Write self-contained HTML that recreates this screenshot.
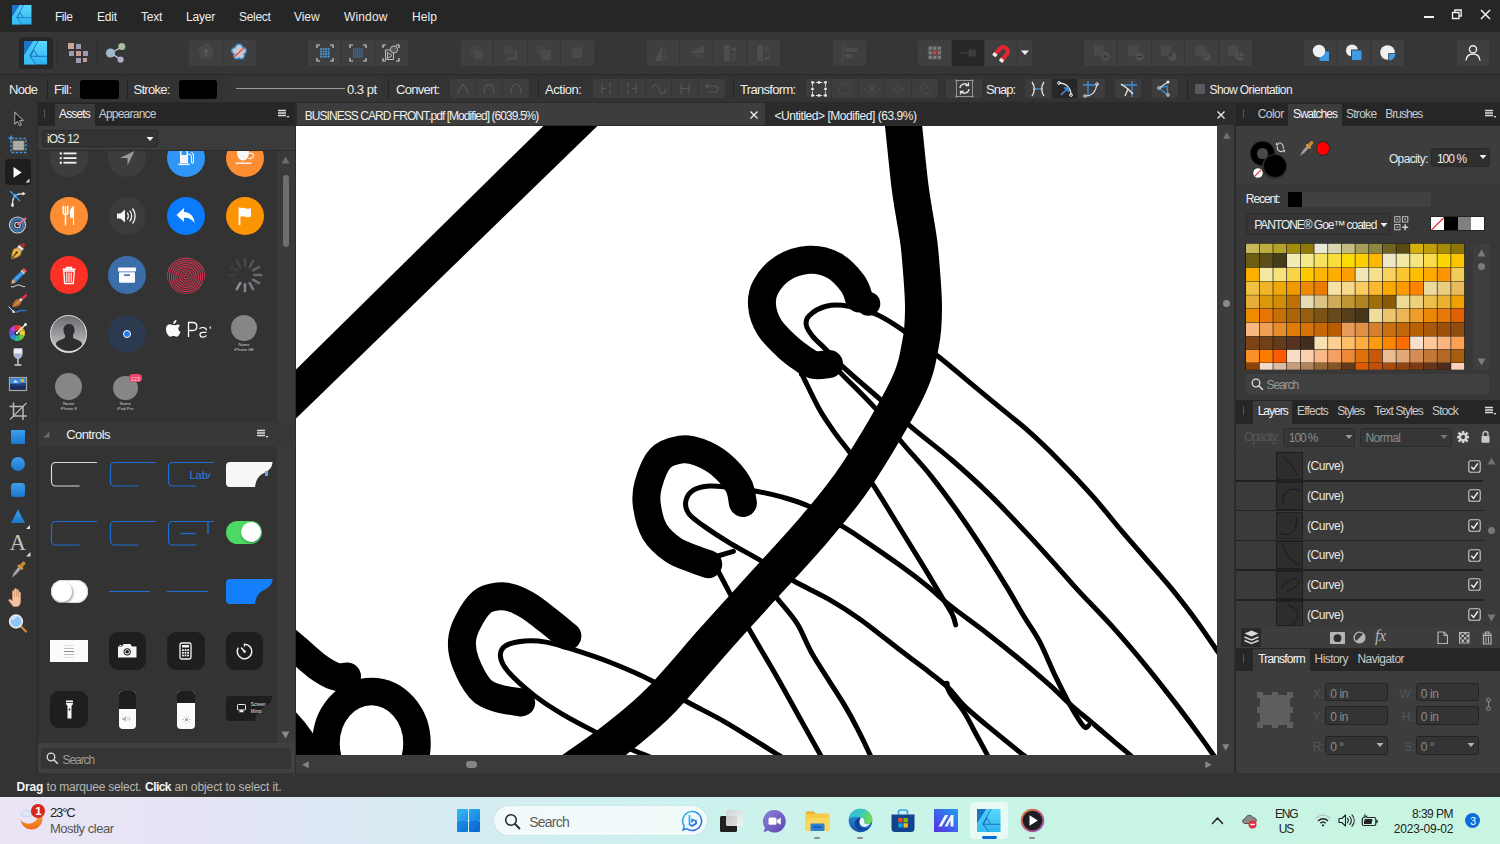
<!DOCTYPE html>
<html><head><meta charset="utf-8">
<style>
*{box-sizing:border-box;margin:0;padding:0}
html,body{width:1500px;height:844px;overflow:hidden;background:#2b2b2b}
body{font-family:"Liberation Sans",sans-serif;font-size:12px;color:#e6e6e6;position:relative}
.a{position:absolute}
.t{position:absolute;white-space:nowrap;line-height:1}
svg{overflow:hidden;display:block}
</style></head><body>
<div class="a" style="left:0;top:0;width:1500px;height:32px;background:#262626"></div>
<div class="a" style="left:0;top:32px;width:1500px;height:42px;background:#363636"></div>
<div class="a" style="left:0;top:74px;width:1500px;height:28px;background:#333333"></div>
<div class="a" style="left:0;top:102px;width:38px;height:673px;background:#333333"></div>
<div class="a" style="left:38px;top:102px;width:256.500px;height:671px;background:#383838"></div>
<div class="a" style="left:294.500px;top:102px;width:942px;height:671px;background:#2c2c2c"></div>
<div class="a" style="left:1217px;top:125px;width:17.300px;height:648px;background:#3c3c3c"></div>
<div class="a" style="left:296px;top:754.500px;width:938.300px;height:18.500px;background:#3c3c3c"></div>
<div class="a" style="left:1236.500px;top:102px;width:263.500px;height:671px;background:#383838"></div>
<div class="a" style="left:0;top:773px;width:1500px;height:24px;background:#333333"></div>
<div class="a" style="left:0;top:797px;width:1500px;height:47px;background:linear-gradient(90deg,#ebe5f5 0%,#e6e4f5 12%,#dde8f4 22%,#d5ecf2 30%,#cdf1ee 45%,#c9f4e8 60%,#c8f5e1 100%)"></div>
<svg class="a" style="left:296px;top:125.600px" width="921.300" height="629.300" viewBox="296 125.600 921.300 629.300">
<rect x="296" y="125" width="921" height="630" fill="#fff"/>
<g fill="none" stroke="#000" stroke-linecap="round" stroke-linejoin="round">
<polygon points="544,125 598,125 296,418 296,369" fill="#000" stroke="none"/>
<path d="M1230.0 670.0C1227.9 666.8 1222.8 658.8 1217.2 650.5C1211.6 642.2 1203.9 630.6 1196.5 620.5C1189.1 610.4 1179.8 598.5 1173.0 590.0C1166.2 581.5 1163.8 579.1 1155.5 569.5C1147.2 559.9 1133.8 544.8 1123.3 532.5C1112.8 520.2 1103.0 507.4 1092.4 495.5C1081.9 483.6 1070.7 471.8 1060.0 461.0C1049.3 450.2 1039.8 440.8 1028.5 430.8C1017.2 420.8 1002.9 409.6 992.5 401.0C982.1 392.4 975.1 386.6 966.0 379.0C956.9 371.4 948.1 363.7 937.7 355.6C927.4 347.5 914.0 337.4 903.9 330.5C893.8 323.6 886.5 318.5 877.3 314.4C868.1 310.3 857.4 307.2 848.9 305.8C840.4 304.4 832.8 304.2 826.2 305.8C819.6 307.4 812.4 312.1 809.1 315.3C805.8 318.5 805.7 321.3 806.3 324.8C806.9 328.3 809.6 332.1 812.9 336.2C816.2 340.3 821.2 344.3 826.2 349.4C831.2 354.4 833.9 358.1 843.0 366.5C852.1 374.9 869.8 389.8 881.1 399.7C892.4 409.6 898.9 416.1 910.8 426.2C922.7 436.3 939.3 448.8 952.4 460.1C965.5 471.4 977.1 481.9 989.4 494.0C1001.7 506.1 1015.1 520.4 1026.4 532.5C1037.7 544.6 1048.6 556.8 1057.2 566.4C1065.8 576.0 1068.8 579.9 1078.1 590.0C1087.4 600.1 1102.1 614.8 1113.3 627.3C1124.5 639.8 1134.6 651.7 1145.3 664.7C1156.0 677.7 1168.4 693.7 1177.3 705.2C1186.2 716.8 1192.7 725.7 1198.7 734.0C1204.8 742.3 1209.7 749.4 1213.6 754.9C1217.5 760.4 1220.6 765.0 1222.0 767.0" stroke-width="5"/>
<path d="M836.0 366.0C836.9 367.2 834.6 366.1 841.3 373.2C848.0 380.3 866.0 397.4 876.1 408.8C886.2 420.2 892.5 430.5 901.6 441.6C910.7 452.7 920.9 462.9 930.9 475.5C940.9 488.1 952.0 503.2 961.7 517.1C971.5 531.0 981.5 546.6 989.4 558.7C997.2 570.9 1003.1 580.5 1008.8 590.0C1014.5 599.5 1018.6 607.1 1023.7 615.6C1028.8 624.1 1034.2 630.9 1039.5 641.0C1044.8 651.1 1050.3 665.2 1055.5 676.0C1060.7 686.8 1066.2 697.8 1070.5 705.5C1074.8 713.2 1078.5 718.9 1081.0 722.5C1083.5 726.1 1084.2 726.8 1085.5 727.2C1086.8 727.7 1088.0 725.5 1088.5 725.2" stroke-width="5"/>
<path d="M801.5 374.0C801.8 374.4 800.2 370.6 803.2 376.5C806.2 382.4 814.3 400.0 819.8 409.7C825.3 419.4 831.2 427.3 836.3 434.5C841.4 441.7 844.4 444.7 850.4 452.8C856.4 460.9 864.0 470.7 872.3 483.2C880.6 495.7 891.3 513.8 900.0 527.9C908.7 542.0 917.5 556.2 924.7 568.0C931.9 579.8 938.6 591.1 943.2 598.8C947.8 606.5 950.3 609.9 952.4 614.2C954.5 618.5 955.2 622.8 955.7 624.5" stroke-width="5"/>
<path d="M1140.0 764.0C1138.4 762.5 1134.9 758.8 1130.4 754.9C1126.0 751.0 1119.7 745.8 1113.3 740.4C1106.9 735.0 1099.1 728.3 1092.0 722.3C1084.9 716.3 1077.8 710.7 1070.7 704.4C1063.6 698.1 1057.8 691.9 1049.3 684.3C1040.8 676.7 1030.2 667.6 1019.5 658.8C1008.8 650.0 996.7 640.3 985.3 631.5C973.9 622.7 960.8 613.6 951.2 606.0C941.6 598.4 936.2 592.9 927.7 586.0C919.2 579.1 911.3 573.0 900.0 564.9C888.7 556.8 869.6 543.7 860.0 537.2C850.4 530.7 850.8 531.1 842.4 526.0C834.0 520.9 819.9 511.3 809.9 506.4C799.9 501.5 791.4 499.4 782.5 496.8C773.6 494.2 765.5 492.5 756.4 490.8C747.3 489.1 735.5 487.8 727.7 486.9C719.9 486.0 715.1 485.2 709.5 485.6C703.9 486.0 697.7 487.1 693.8 489.5C689.9 491.9 686.9 496.0 686.0 499.9C685.1 503.8 685.6 508.6 688.6 513.0C691.6 517.4 697.3 521.0 704.3 526.0C711.2 531.0 720.7 537.1 730.3 542.9C739.9 548.7 751.5 554.6 762.0 560.9C772.5 567.1 782.3 574.1 793.4 580.4C804.5 586.7 817.5 592.3 828.6 598.7C839.7 605.1 848.1 610.3 860.0 618.8C871.9 627.3 889.8 641.9 900.0 649.7C910.2 657.5 913.5 659.7 921.3 665.7C929.1 671.8 939.8 679.4 946.9 686.0C954.0 692.6 956.2 697.7 964.0 705.2C971.8 712.7 983.9 722.5 993.9 730.8C1003.9 739.1 1016.9 749.4 1023.7 754.9C1030.5 760.4 1033.1 762.5 1035.0 764.0" stroke-width="5"/>
<path d="M946.9 686.0C947.6 687.4 948.4 690.2 951.2 694.5C954.1 698.8 959.7 704.8 964.0 711.6C968.3 718.4 972.9 727.9 976.8 735.1C980.7 742.3 985.0 750.1 987.5 754.9C990.0 759.7 991.2 762.5 992.0 764.0" stroke-width="5"/>
<path d="M717.8 555.6C720.4 554.8 730.8 551.7 733.4 550.9" stroke-width="5"/>
<path d="M716.0 566.0C716.5 567.1 716.6 567.8 719.1 572.6C721.6 577.4 725.8 585.4 730.8 594.7C735.8 604.0 741.4 615.1 749.0 628.6C756.6 642.1 767.5 660.0 776.4 675.6C785.3 691.2 795.1 709.3 802.5 722.5C809.9 735.7 816.8 747.9 820.7 755.0C824.6 762.1 825.1 763.3 826.0 765.0" stroke-width="5"/>
<path d="M770.0 590.0C771.3 591.5 773.2 593.1 777.7 598.7C782.2 604.3 791.4 614.1 797.3 623.4C803.2 632.7 805.1 641.2 812.9 654.7C820.7 668.2 836.4 691.2 844.2 704.2C852.0 717.2 855.4 724.4 859.8 732.9C864.1 741.4 867.8 749.6 870.3 755.0C872.8 760.4 874.2 763.3 875.0 765.0" stroke-width="5"/>
<path d="M795.0 765.0C792.3 763.3 785.1 758.8 779.0 755.0C772.9 751.2 767.3 747.6 758.2 742.0C749.1 736.4 736.5 728.2 724.3 721.2C712.1 714.2 697.1 707.0 685.2 700.3C673.3 693.6 665.2 687.2 652.7 680.8C640.2 674.4 623.4 667.2 610.0 661.9C596.6 656.6 582.8 652.2 572.1 648.8C561.5 645.4 554.0 643.1 546.1 641.7C538.2 640.3 531.5 639.9 524.8 640.5C518.1 641.1 509.9 642.7 505.8 645.3C501.7 647.9 500.0 651.6 500.4 655.9C500.8 660.2 502.6 664.8 508.2 671.3C513.8 677.8 525.1 687.9 534.2 695.0C543.3 702.1 552.4 707.9 562.7 714.0C573.0 720.1 584.5 726.0 595.8 731.8C607.1 737.6 622.0 744.7 630.4 748.6C638.8 752.5 639.4 752.3 646.0 755.0C652.6 757.7 666.0 763.3 670.0 765.0" stroke-width="5"/>
<circle cx="946.5" cy="683.5" r="3.2" fill="#000" stroke="none"/>
<path d="M900.0 95.0C900.6 100.0 901.8 109.8 903.5 125.0C905.2 140.2 907.8 168.5 910.0 186.0C912.2 203.5 915.3 218.9 917.0 230.0C918.7 241.1 918.9 240.1 920.0 252.7C921.1 265.3 923.4 290.6 923.5 305.8C923.6 321.0 923.3 329.8 920.5 343.7C917.7 357.6 917.2 367.5 906.7 389.2C896.2 410.9 872.5 450.7 857.2 473.8C841.9 496.9 832.5 507.4 815.0 528.0C797.5 548.6 769.1 578.7 752.3 597.4C735.4 616.1 729.1 622.9 713.9 640.0C698.6 657.1 675.9 684.5 660.8 700.0C645.7 715.5 634.5 723.8 623.5 732.9C612.5 742.0 605.9 746.5 594.5 754.7C583.1 762.9 561.6 777.5 555.0 782.0" stroke-width="37" stroke-linecap="butt"/>
<path d="M859.0 298.0C858.0 295.5 856.9 288.5 852.7 283.0C848.5 277.5 841.0 268.9 833.7 265.0C826.4 261.1 817.6 258.9 809.1 259.4C800.6 259.9 789.9 263.3 782.6 267.9C775.3 272.5 768.9 280.6 765.5 286.9C762.1 293.2 761.5 299.2 762.1 305.8C762.7 312.4 765.2 320.1 769.3 326.7C773.3 333.3 780.7 340.2 786.4 345.6C792.1 351.0 798.7 355.7 803.4 358.9C808.1 362.1 810.5 363.8 814.8 364.6C819.1 365.4 826.6 363.8 829.0 363.6" stroke-width="28"/>
<path d="M742.9 502.5C742.1 499.5 742.0 490.8 738.2 484.3C734.4 477.8 726.4 468.8 719.9 463.4C713.4 458.0 705.5 454.1 699.0 451.7C692.5 449.3 687.3 448.0 680.8 449.1C674.3 450.2 665.4 452.3 660.0 458.2C654.6 464.1 650.4 476.5 648.2 484.3C646.0 492.1 645.8 497.3 646.9 505.1C648.0 512.9 650.4 523.8 654.7 531.2C659.1 538.6 666.5 544.8 673.0 549.4C679.5 554.0 687.9 556.2 693.8 558.6C699.7 561.0 705.8 562.9 708.2 563.8" stroke-width="28"/>
<path d="M567.4 635.8C564.2 633.2 554.8 625.3 548.5 620.4C542.2 615.5 535.4 610.0 529.5 606.2C523.6 602.5 518.0 599.6 512.9 597.9C507.8 596.2 503.8 595.4 498.7 596.0C493.6 596.6 487.2 597.2 482.1 601.5C477.0 605.8 471.2 615.1 467.9 621.6C464.5 628.1 462.4 633.8 462.0 640.5C461.6 647.2 462.5 654.0 465.5 661.9C468.5 669.8 474.7 682.0 479.8 687.9C484.9 693.8 489.4 695.0 496.3 697.4C503.2 699.8 517.1 701.3 521.2 702.1" stroke-width="28"/>
<circle cx="868.3" cy="303.3" r="12" fill="#000" stroke="none"/>
<path d="M280.0 634.0C282.7 636.3 289.9 642.5 296.0 647.7C302.1 652.9 310.0 660.7 316.5 665.4C323.0 670.1 329.9 674.2 335.0 676.0C340.1 677.8 345.0 676.0 347.0 676.0" stroke-width="28"/>
<ellipse cx="371.5" cy="743" rx="45.5" ry="52" stroke-width="27.5"/>
<polygon points="296,711.8 305,722 312.7,732.6 318,745 320,755 296,755" fill="#000" stroke="none"/>
</g></svg>
<svg class="a" style="left:12px;top:5px" width="19.5" height="19.5" viewBox="0 0 20 20"><defs><linearGradient id="lg120" x1="0" y1="0" x2="0" y2="1"><stop offset="0" stop-color="#5cd9fd"/><stop offset="1" stop-color="#2db2ef"/></linearGradient></defs><rect width="20" height="20" fill="url(#lg120)"/><polygon points="0,0 8,0 0,12.4" fill="#1b74c8"/><polygon points="8,0 12,0 5,12.6 10,20 0,20 0,12.4" fill="#3fc4f7" opacity="0.55"/><path d="M12 0L5 12.6L10 20M5 13H20M8.400 7.600L11.600 12.800M8.400 7.600L5.600 12.800" stroke="#1767b4" stroke-width="0.750" fill="none"/></svg>
<div class="t" style="left:55.0px;top:10.8px;font-size:12px;color:#ededed;letter-spacing:-0.459px;">File</div>
<div class="t" style="left:97.0px;top:10.8px;font-size:12px;color:#ededed;letter-spacing:-0.170px;">Edit</div>
<div class="t" style="left:141.0px;top:10.8px;font-size:12px;color:#ededed;letter-spacing:-0.252px;">Text</div>
<div class="t" style="left:186.0px;top:10.8px;font-size:12px;color:#ededed;letter-spacing:-0.203px;">Layer</div>
<div class="t" style="left:239.0px;top:10.8px;font-size:12px;color:#ededed;letter-spacing:-0.309px;">Select</div>
<div class="t" style="left:294.0px;top:10.8px;font-size:12px;color:#ededed;letter-spacing:-0.073px;">View</div>
<div class="t" style="left:344.0px;top:10.8px;font-size:12px;color:#ededed;letter-spacing:0.137px;">Window</div>
<div class="t" style="left:412.0px;top:10.8px;font-size:12px;color:#ededed;letter-spacing:0.080px;">Help</div>
<div class="a" style="left:1424px;top:15.5px;width:9.5px;height:2.5px;background:#f2f2f2;"></div>
<svg class="a" style="left:1451px;top:8px" width="12" height="12" viewBox="0 0 12 12"><path d="M1.5 4.5h6.5v6h-6.5zM3.8 4.3V2h6.4v6H8.2" fill="none" stroke="#f2f2f2" stroke-width="1.3"/></svg>
<svg class="a" style="left:1480px;top:9px" width="11" height="11" viewBox="0 0 11 11"><path d="M1 1l9 9M10 1l-9 9" stroke="#f2f2f2" stroke-width="1.5"/></svg>
<div class="a" style="left:0px;top:73.8px;width:1500px;height:1.2px;background:#282828;"></div>
<div class="a" style="left:38px;top:101.7px;width:1462px;height:0.8px;background:#2a2a2a;"></div>
<div class="a" style="left:19px;top:37px;width:33.5px;height:31.5px;background:#282828;border-radius:3px;"></div>
<svg class="a" style="left:23.5px;top:41px" width="23.5" height="23.5" viewBox="0 0 20 20"><defs><linearGradient id="lg235" x1="0" y1="0" x2="0" y2="1"><stop offset="0" stop-color="#5cd9fd"/><stop offset="1" stop-color="#2db2ef"/></linearGradient></defs><rect width="20" height="20" fill="url(#lg235)"/><polygon points="0,0 8,0 0,12.4" fill="#1b74c8"/><polygon points="8,0 12,0 5,12.6 10,20 0,20 0,12.4" fill="#3fc4f7" opacity="0.55"/><path d="M12 0L5 12.6L10 20M5 13H20M8.400 7.600L11.600 12.800M8.400 7.600L5.600 12.800" stroke="#1767b4" stroke-width="0.750" fill="none"/></svg>
<div class="a" style="left:57px;top:38px;width:1px;height:29px;background:#2a2a2a;"></div>
<div class="a" style="left:97px;top:38px;width:1px;height:29px;background:#2a2a2a;"></div>
<div class="a" style="left:68px;top:43px;width:6px;height:6px;background:#c9a696;"></div>
<div class="a" style="left:76px;top:44.2px;width:5px;height:5px;background:#9c9bb3;"></div>
<div class="a" style="left:69.2px;top:51px;width:5px;height:5px;background:#9c9bb3;"></div>
<div class="a" style="left:76px;top:51px;width:5.2px;height:5.2px;background:#c39d92;"></div>
<div class="a" style="left:83px;top:51px;width:5px;height:5px;background:#9c9bb3;"></div>
<div class="a" style="left:76px;top:58px;width:5px;height:5px;background:#9c9bb3;"></div>
<div class="a" style="left:83px;top:58px;width:4px;height:4px;background:#c39d92;"></div>
<svg class="a" style="left:104px;top:41px" width="24" height="24" viewBox="0 0 24 24"><path d="M7 12L17.5 6M7 12L16.5 18.5" stroke="#cfd6db" stroke-width="1.2"/><circle cx="6.5" cy="12" r="4.6" fill="#9db9c9"/><circle cx="17.8" cy="5.6" r="3.5" fill="#a9bda0"/><circle cx="16.6" cy="18.6" r="3.1" fill="#b5aacb"/></svg>
<div class="a" style="left:189px;top:40px;width:66.5px;height:25.5px;background:#3f3f3f;border-radius:2px;"></div><div class="a" style="left:221.75px;top:40px;width:1px;height:25.5px;background:#343434;"></div>
<svg class="a" style="left:193.5px;top:41px" width="24" height="24" viewBox="0 0 24 24"><path d="M12 3.2c2.2 0 3.6 1.6 3.5 3.4 1.9-.2 3.7 1.2 3.7 3.2 0 1.6-1 2.7-2.3 3.2.8 1.4.4 3.4-1.2 4.3-1.4.8-3 .4-3.7-.6-.7 1-2.3 1.4-3.7.6-1.6-.9-2-2.9-1.2-4.3C5.800 12.500 4.800 11.400 4.800 9.800c0-2 1.800-3.400 3.700-3.200C8.400 4.800 9.800 3.200 12 3.200z" fill="#484848" stroke="#505050" stroke-width="1"/><path d="M12 15V8.500M9.500 11L12 8.500l2.500 2.500" stroke="#5c5c5c" stroke-width="1.300" fill="none"/></svg>
<svg class="a" style="left:227px;top:41px" width="24" height="24" viewBox="0 0 24 24"><path d="M12 3.2c2.2 0 3.6 1.6 3.5 3.4 1.9-.2 3.7 1.2 3.7 3.2 0 1.6-1 2.7-2.3 3.2.8 1.4.4 3.4-1.2 4.3-1.4.8-3 .4-3.7-.6-.7 1-2.3 1.4-3.7.6-1.6-.9-2-2.9-1.2-4.3C5.800 12.500 4.800 11.400 4.800 9.800c0-2 1.800-3.400 3.700-3.200C8.400 4.800 9.800 3.200 12 3.200z" fill="#c9c9cf" stroke="#3c93dc" stroke-width="1.400"/><path d="M6.500 16.500L17.500 6.500" stroke="#ef4a3c" stroke-width="1.500"/></svg>
<div class="a" style="left:308px;top:40px;width:100px;height:25.5px;background:#3f3f3f;border-radius:2px;"></div><div class="a" style="left:340.833px;top:40px;width:1px;height:25.5px;background:#343434;"></div><div class="a" style="left:374.167px;top:40px;width:1px;height:25.5px;background:#343434;"></div>
<svg class="a" style="left:313.5px;top:42px" width="22" height="22" viewBox="0 0 22 22"><rect x="6.20" y="6.20" width="1.80" height="1.80" fill="#4a9be0"/><rect x="6.20" y="8.70" width="1.80" height="1.80" fill="#4a9be0"/><rect x="6.20" y="11.20" width="1.80" height="1.80" fill="#4a9be0"/><rect x="6.20" y="13.70" width="1.80" height="1.80" fill="#4a9be0"/><rect x="8.70" y="6.20" width="1.80" height="1.80" fill="#4a9be0"/><rect x="8.70" y="8.70" width="1.80" height="1.80" fill="#4a9be0"/><rect x="8.70" y="11.20" width="1.80" height="1.80" fill="#4a9be0"/><rect x="8.70" y="13.70" width="1.80" height="1.80" fill="#4a9be0"/><rect x="11.20" y="6.20" width="1.80" height="1.80" fill="#4a9be0"/><rect x="11.20" y="8.70" width="1.80" height="1.80" fill="#4a9be0"/><rect x="11.20" y="11.20" width="1.80" height="1.80" fill="#4a9be0"/><rect x="11.20" y="13.70" width="1.80" height="1.80" fill="#4a9be0"/><rect x="13.70" y="6.20" width="1.80" height="1.80" fill="#4a9be0"/><rect x="13.70" y="8.70" width="1.80" height="1.80" fill="#4a9be0"/><rect x="13.70" y="11.20" width="1.80" height="1.80" fill="#4a9be0"/><rect x="13.70" y="13.70" width="1.80" height="1.80" fill="#4a9be0"/><path d="M3 6V3h3M16 3h3v3M19 16v3h-3M6 19H3v-3" stroke="#cfcfcf" stroke-width="1.2" fill="none"/></svg>
<svg class="a" style="left:347px;top:42px" width="22" height="22" viewBox="0 0 22 22"><rect x="6.20" y="6.20" width="1.30" height="1.30" fill="#3b7cb8"/><rect x="6.20" y="8.20" width="1.30" height="1.30" fill="#3b7cb8"/><rect x="6.20" y="10.20" width="1.30" height="1.30" fill="#3b7cb8"/><rect x="6.20" y="12.20" width="1.30" height="1.30" fill="#3b7cb8"/><rect x="6.20" y="14.20" width="1.30" height="1.30" fill="#3b7cb8"/><rect x="8.20" y="6.20" width="1.30" height="1.30" fill="#3b7cb8"/><rect x="8.20" y="8.20" width="1.30" height="1.30" fill="#3b7cb8"/><rect x="8.20" y="10.20" width="1.30" height="1.30" fill="#3b7cb8"/><rect x="8.20" y="12.20" width="1.30" height="1.30" fill="#3b7cb8"/><rect x="8.20" y="14.20" width="1.30" height="1.30" fill="#3b7cb8"/><rect x="10.20" y="6.20" width="1.30" height="1.30" fill="#3b7cb8"/><rect x="10.20" y="8.20" width="1.30" height="1.30" fill="#3b7cb8"/><rect x="10.20" y="10.20" width="1.30" height="1.30" fill="#3b7cb8"/><rect x="10.20" y="12.20" width="1.30" height="1.30" fill="#3b7cb8"/><rect x="10.20" y="14.20" width="1.30" height="1.30" fill="#3b7cb8"/><rect x="12.20" y="6.20" width="1.30" height="1.30" fill="#3b7cb8"/><rect x="12.20" y="8.20" width="1.30" height="1.30" fill="#3b7cb8"/><rect x="12.20" y="10.20" width="1.30" height="1.30" fill="#3b7cb8"/><rect x="12.20" y="12.20" width="1.30" height="1.30" fill="#3b7cb8"/><rect x="12.20" y="14.20" width="1.30" height="1.30" fill="#3b7cb8"/><rect x="14.20" y="6.20" width="1.30" height="1.30" fill="#3b7cb8"/><rect x="14.20" y="8.20" width="1.30" height="1.30" fill="#3b7cb8"/><rect x="14.20" y="10.20" width="1.30" height="1.30" fill="#3b7cb8"/><rect x="14.20" y="12.20" width="1.30" height="1.30" fill="#3b7cb8"/><rect x="14.20" y="14.20" width="1.30" height="1.30" fill="#3b7cb8"/><path d="M3 6V3h3M16 3h3v3M19 16v3h-3M6 19H3v-3" stroke="#cfcfcf" stroke-width="1.2" fill="none"/></svg>
<svg class="a" style="left:380px;top:42px" width="22" height="22" viewBox="0 0 22 22"><path d="M3 6V3h3M16 3h3v3M19 16v3h-3M6 19H3v-3" stroke="#cfcfcf" stroke-width="1.2" fill="none"/><path d="M5.500 8h8v9.500h-8z" fill="#474747" stroke="#b9b9b9" stroke-width="1"/><circle cx="14" cy="7.500" r="3.600" fill="#5a5a5a" stroke="#b9b9b9" stroke-width="1"/><path d="M7.500 10.500l4.500 3-4.500 3z" fill="none" stroke="#b9b9b9" stroke-width="1"/></svg>
<div class="a" style="left:460.5px;top:40px;width:133px;height:25.5px;background:#3f3f3f;border-radius:2px;"></div><div class="a" style="left:493.25px;top:40px;width:1px;height:25.5px;background:#343434;"></div><div class="a" style="left:526.5px;top:40px;width:1px;height:25.5px;background:#343434;"></div><div class="a" style="left:559.75px;top:40px;width:1px;height:25.5px;background:#343434;"></div>
<svg class="a" style="left:465.1px;top:41px" width="24" height="24" viewBox="0 0 24 24"><g transform="translate(12,12)"><rect x="-6" y="-6" width="8" height="8" fill="#464646"/><rect x="-2" y="-2" width="8" height="8" fill="#4b4b4b"/></g></svg>
<svg class="a" style="left:498.35px;top:41px" width="24" height="24" viewBox="0 0 24 24"><g transform="translate(12,12)"><rect x="-6" y="-7" width="9" height="9" fill="#454545"/><path d="M4 -3h3v10h-10v-3h7z" fill="#4b4b4b"/></g></svg>
<svg class="a" style="left:531.6px;top:41px" width="24" height="24" viewBox="0 0 24 24"><g transform="translate(12,12)"><rect x="-7" y="-7" width="9" height="9" fill="#454545"/><rect x="-3" y="-3" width="10" height="10" fill="#4b4b4b"/></g></svg>
<svg class="a" style="left:564.85px;top:41px" width="24" height="24" viewBox="0 0 24 24"><g transform="translate(12,12)"><rect x="-6" y="-6" width="11" height="11" fill="#464646"/><rect x="-4" y="-4" width="9" height="9" fill="#4b4b4b"/></g></svg>
<div class="a" style="left:646.5px;top:40px;width:133px;height:25.5px;background:#3f3f3f;border-radius:2px;"></div><div class="a" style="left:679.25px;top:40px;width:1px;height:25.5px;background:#343434;"></div><div class="a" style="left:712.5px;top:40px;width:1px;height:25.5px;background:#343434;"></div><div class="a" style="left:745.75px;top:40px;width:1px;height:25.5px;background:#343434;"></div>
<svg class="a" style="left:651px;top:41px" width="24" height="24" viewBox="0 0 24 24"><path d="M11.500 4v16h-8z" fill="#4d4d4d"/><path d="M12.500 4v16h5z" fill="#454545"/></svg>
<svg class="a" style="left:684.5px;top:41px" width="24" height="24" viewBox="0 0 24 24"><path d="M4 12L19 4.500V12z" fill="#4d4d4d"/><path d="M4 13l15 0v5z" fill="#454545"/></svg>
<svg class="a" style="left:717.5px;top:41px" width="24" height="24" viewBox="0 0 24 24"><rect x="6" y="4" width="6" height="16" fill="#4d4d4d"/><rect x="14" y="12" width="4" height="8" fill="#464646"/><path d="M14 8h3.500v2.500M16 6.500L14 8l2 1.500" stroke="#565656" fill="none" stroke-width="1.200"/></svg>
<svg class="a" style="left:751px;top:41px" width="24" height="24" viewBox="0 0 24 24"><rect x="6" y="4" width="6" height="16" fill="#4d4d4d"/><rect x="14" y="4" width="4" height="8" fill="#464646"/><path d="M18 14v3.500h-4M15.500 16L14 17.500l1.500 1.500" stroke="#565656" fill="none" stroke-width="1.200"/></svg>
<div class="a" style="left:833px;top:40px;width:33px;height:25.5px;background:#3f3f3f;border-radius:2px;"></div>
<svg class="a" style="left:837.5px;top:41px" width="24" height="24" viewBox="0 0 24 24"><path d="M5 4v16" stroke="#4e4e4e" stroke-width="1.200"/><rect x="7" y="7" width="12" height="4" fill="#4c4c4c"/><rect x="7" y="13" width="8" height="4" fill="#4c4c4c"/></svg>
<div class="a" style="left:917.5px;top:40px;width:114.5px;height:25.5px;background:#3f3f3f;border-radius:2px;"></div><div class="a" style="left:950.7px;top:40px;width:1px;height:25.5px;background:#343434;"></div><div class="a" style="left:984.3px;top:40px;width:1px;height:25.5px;background:#343434;"></div><div class="a" style="left:1017.4px;top:40px;width:1px;height:25.5px;background:#343434;"></div>
<div class="a" style="left:951.7px;top:40px;width:32.6px;height:25.5px;background:#272727;"></div>
<svg class="a" style="left:922.5px;top:41px" width="24" height="24" viewBox="0 0 24 24"><rect x="5.5" y="5.5" width="3.400" height="3.400" fill="#7b7b7b"/><rect x="5.5" y="10.1" width="3.400" height="3.400" fill="#7b7b7b"/><rect x="5.5" y="14.7" width="3.400" height="3.400" fill="#7b7b7b"/><rect x="10.1" y="5.5" width="3.400" height="3.400" fill="#7b7b7b"/><rect x="10.1" y="10.1" width="3.400" height="3.400" fill="#e63b36"/><rect x="10.1" y="14.7" width="3.400" height="3.400" fill="#7b7b7b"/><rect x="14.7" y="5.5" width="3.400" height="3.400" fill="#7b7b7b"/><rect x="14.7" y="10.1" width="3.400" height="3.400" fill="#7b7b7b"/><rect x="14.7" y="14.7" width="3.400" height="3.400" fill="#7b7b7b"/><path d="M4 9.500h16M4 14.200h16M9.500 4v16M14.200 4v16" stroke="#5c5c5c" stroke-width="0.600"/></svg>
<svg class="a" style="left:956px;top:41px" width="24" height="24" viewBox="0 0 24 24"><rect x="13" y="8.500" width="7" height="7" fill="#3a3a3a"/><path d="M4 12h11M12.500 9.500L15 12l-2.500 2.500" stroke="#454545" stroke-width="1.200" fill="none"/></svg>
<svg class="a" style="left:989.5px;top:41px" width="24" height="24" viewBox="0 0 24 24"><g transform="rotate(40 12 12)"><path d="M5.500 19V10a6.500 6.500 0 0 1 13 0v9h-4.200v-9a2.300 2.300 0 0 0-4.600 0v9z" fill="#e5252f"/><rect x="5.500" y="16.200" width="4.200" height="3.400" fill="#f0f0f0"/><rect x="14.300" y="16.200" width="4.200" height="3.400" fill="#f0f0f0"/></g></svg>
<svg class="a" style="left:1020px;top:49px" width="10" height="8" viewBox="0 0 10 8"><path d="M1 1.500h8L5 6z" fill="#f0f0f0"/></svg>
<div class="a" style="left:1084px;top:40px;width:167.5px;height:25.5px;background:#3f3f3f;border-radius:2px;"></div><div class="a" style="left:1117px;top:40px;width:1px;height:25.5px;background:#343434;"></div><div class="a" style="left:1150.5px;top:40px;width:1px;height:25.5px;background:#343434;"></div><div class="a" style="left:1184px;top:40px;width:1px;height:25.5px;background:#343434;"></div><div class="a" style="left:1217.5px;top:40px;width:1px;height:25.5px;background:#343434;"></div>
<svg class="a" style="left:1089px;top:41px" width="24" height="24" viewBox="0 0 24 24"><rect x="5" y="4.500" width="10.500" height="10.500" fill="#494949"/><circle cx="16.500" cy="15.500" r="4.300" fill="#4f4f4f"/><path d="M14.500 15.500h4M16.500 13.500v4" stroke="#2f2f2f" stroke-width="1.100"/></svg>
<svg class="a" style="left:1122.5px;top:41px" width="24" height="24" viewBox="0 0 24 24"><rect x="5" y="4.500" width="10.500" height="10.500" fill="#494949"/><circle cx="16.500" cy="15.500" r="4.300" fill="#4f4f4f"/><path d="M14.500 15.500h4" stroke="#2f2f2f" stroke-width="1.100"/></svg>
<svg class="a" style="left:1156px;top:41px" width="24" height="24" viewBox="0 0 24 24"><rect x="5" y="4.500" width="10.500" height="10.500" fill="#494949"/><circle cx="16.500" cy="15.500" r="4.300" fill="#4f4f4f"/><path d="M16.500 15.500V11.500A4 4 0 0 0 12.500 15.500z" fill="#3d3d3d"/></svg>
<svg class="a" style="left:1189.5px;top:41px" width="24" height="24" viewBox="0 0 24 24"><rect x="5" y="4.500" width="10.500" height="10.500" fill="#494949"/><circle cx="16.500" cy="15.500" r="4.300" fill="#4f4f4f"/><path d="M12.500 15.500h4v-4" stroke="#3d3d3d" fill="none"/></svg>
<svg class="a" style="left:1223px;top:41px" width="24" height="24" viewBox="0 0 24 24"><rect x="5" y="4.500" width="10.500" height="10.500" fill="#494949"/><circle cx="16.500" cy="15.500" r="4.300" fill="#4f4f4f"/><path d="M16.500 11.500v4h4" stroke="#3d3d3d" fill="none"/></svg>
<div class="a" style="left:1304px;top:40px;width:100px;height:25.5px;background:#3f3f3f;border-radius:2px;"></div><div class="a" style="left:1336.83px;top:40px;width:1px;height:25.5px;background:#343434;"></div><div class="a" style="left:1370.17px;top:40px;width:1px;height:25.5px;background:#343434;"></div>
<svg class="a" style="left:1308.5px;top:41px" width="24" height="24" viewBox="0 0 24 24"><rect x="10.500" y="10.500" width="9.500" height="9.500" fill="#3e9be8"/><circle cx="10" cy="10" r="6.200" fill="#f0f0f0"/></svg>
<svg class="a" style="left:1342px;top:41px" width="24" height="24" viewBox="0 0 24 24"><circle cx="10" cy="9.500" r="6" fill="#f0f0f0"/><rect x="9.500" y="9" width="10.500" height="10.500" fill="#3e9be8" stroke="#3f3f3f" stroke-width="1"/></svg>
<svg class="a" style="left:1375.5px;top:41px" width="24" height="24" viewBox="0 0 24 24"><circle cx="11.500" cy="11.500" r="7.300" fill="#f0f0f0"/><path d="M12.500 12.500h7.500a7.500 7.500 0 0 1-7.500 7.500z" fill="#3e9be8" stroke="#3f3f3f" stroke-width="0.800"/></svg>
<div class="a" style="left:1456.5px;top:40px;width:32.5px;height:25.5px;background:#3f3f3f;border-radius:2px;"></div>
<svg class="a" style="left:1461px;top:41px" width="24" height="24" viewBox="0 0 24 24"><circle cx="12" cy="8.300" r="3.600" fill="none" stroke="#f0f0f0" stroke-width="1.400"/><path d="M5 19.500c.5-4.500 3.500-6.500 7-6.500s6.500 2 7 6.500" fill="none" stroke="#f0f0f0" stroke-width="1.400"/></svg>
<div class="t" style="left:9.0px;top:83.0px;font-size:13px;color:#ededed;letter-spacing:-0.669px;">Node</div>
<div class="a" style="left:47px;top:79px;width:1px;height:20px;background:#252525;"></div>
<div class="t" style="left:54.0px;top:83.0px;font-size:13px;color:#ededed;letter-spacing:-0.543px;">Fill:</div>
<div class="a" style="left:80px;top:80px;width:38.5px;height:18.5px;background:#000;border-radius:3px;"></div>
<div class="a" style="left:127px;top:79px;width:1px;height:20px;background:#252525;"></div>
<div class="t" style="left:133.5px;top:83.0px;font-size:13px;color:#ededed;letter-spacing:-0.741px;">Stroke:</div>
<div class="a" style="left:178.5px;top:80px;width:38.5px;height:18.5px;background:#000;border-radius:3px;"></div>
<div class="a" style="left:225.5px;top:77px;width:155.5px;height:23.5px;background:#353535;border-radius:2px;"></div>
<div class="a" style="left:235.5px;top:88.3px;width:109px;height:1px;background:#9a9a9a;"></div>
<div class="t" style="left:347.0px;top:83.0px;font-size:13px;color:#ededed;letter-spacing:-0.504px;">0.3 pt</div>
<div class="a" style="left:387.5px;top:79px;width:1px;height:20px;background:#252525;"></div>
<div class="t" style="left:396.0px;top:83.0px;font-size:13px;color:#ededed;letter-spacing:-0.704px;">Convert:</div>
<div class="a" style="left:450px;top:78.8px;width:78.5px;height:18.8px;background:#3d3d3d;border-radius:2px;"></div><div class="a" style="left:475.667px;top:78.8px;width:1px;height:18.8px;background:#343434;"></div><div class="a" style="left:501.833px;top:78.8px;width:1px;height:18.8px;background:#343434;"></div>
<svg class="a" style="left:453px;top:79px" width="20" height="19" viewBox="0 0 20 19"><path d="M4 15L10 5l6 10" stroke="#575757" fill="none" stroke-width="1.100"/></svg>
<svg class="a" style="left:479px;top:79px" width="20" height="19" viewBox="0 0 20 19"><path d="M5 15c0-6 2-9 5-9M15 15c0-6-2-9-5-9M6 6h8" stroke="#575757" fill="none" stroke-width="1.100"/></svg>
<svg class="a" style="left:505.5px;top:79px" width="20" height="19" viewBox="0 0 20 19"><path d="M5 15c0-7 2-10 5-10s5 3 5 10" stroke="#575757" fill="none" stroke-width="1.100"/></svg>
<div class="a" style="left:537.5px;top:79px;width:1px;height:20px;background:#252525;"></div>
<div class="t" style="left:545.0px;top:83.0px;font-size:13px;color:#ededed;letter-spacing:-0.463px;">Action:</div>
<div class="a" style="left:592.5px;top:78.8px;width:132px;height:18.8px;background:#3d3d3d;border-radius:2px;"></div><div class="a" style="left:618.4px;top:78.8px;width:1px;height:18.8px;background:#343434;"></div><div class="a" style="left:644.8px;top:78.8px;width:1px;height:18.8px;background:#343434;"></div><div class="a" style="left:671.2px;top:78.8px;width:1px;height:18.8px;background:#343434;"></div><div class="a" style="left:697.6px;top:78.8px;width:1px;height:18.8px;background:#343434;"></div>
<svg class="a" style="left:595.7px;top:79px" width="20" height="19" viewBox="0 0 20 19"><path d="M6 4v11M14 4v4M14 11v4M6 9.500h4" stroke="#575757" fill="none" stroke-width="1.100"/></svg>
<svg class="a" style="left:622.1px;top:79px" width="20" height="19" viewBox="0 0 20 19"><path d="M6 4v4M6 11v4M14 4v11M10 9.500h4" stroke="#575757" fill="none" stroke-width="1.100"/></svg>
<svg class="a" style="left:648.5px;top:79px" width="20" height="19" viewBox="0 0 20 19"><path d="M3 10c2-6 5-6 7 0s5 6 7 0" stroke="#575757" fill="none" stroke-width="1.100"/></svg>
<svg class="a" style="left:674.9px;top:79px" width="20" height="19" viewBox="0 0 20 19"><path d="M6 4v11M14 4v11M6 9.500h8" stroke="#575757" fill="none" stroke-width="1.100"/></svg>
<svg class="a" style="left:701.3px;top:79px" width="20" height="19" viewBox="0 0 20 19"><path d="M5 7h9a3 3 0 0 1 0 6H8M7.500 5L5 7l2.500 2" stroke="#575757" fill="none" stroke-width="1.100"/></svg>
<div class="a" style="left:732.5px;top:79px;width:1px;height:20px;background:#252525;"></div>
<div class="t" style="left:740.0px;top:83.0px;font-size:13px;color:#ededed;letter-spacing:-0.686px;">Transform:</div>
<div class="a" style="left:805.5px;top:78.8px;width:132px;height:18.8px;background:#3d3d3d;border-radius:2px;"></div><div class="a" style="left:831.4px;top:78.8px;width:1px;height:18.8px;background:#343434;"></div><div class="a" style="left:857.8px;top:78.8px;width:1px;height:18.8px;background:#343434;"></div><div class="a" style="left:884.2px;top:78.8px;width:1px;height:18.8px;background:#343434;"></div><div class="a" style="left:910.6px;top:78.8px;width:1px;height:18.8px;background:#343434;"></div>
<svg class="a" style="left:808.5px;top:78.5px" width="20" height="20" viewBox="0 0 20 20"><rect x="3.500" y="3.500" width="13" height="13" fill="none" stroke="#e0e0e0" stroke-width="1" stroke-dasharray="2.200 1.500"/><g fill="#e8e8e8"><circle cx="3.500" cy="3.500" r="1.400"/><circle cx="16.500" cy="3.500" r="1.400"/><circle cx="3.500" cy="16.500" r="1.400"/><circle cx="16.500" cy="16.500" r="1.400"/><circle cx="10" cy="3.500" r="1.400"/><circle cx="10" cy="16.500" r="1.400"/><circle cx="3.500" cy="10" r="1.400"/><circle cx="16.500" cy="10" r="1.400"/></g></svg>
<svg class="a" style="left:835px;top:78.5px" width="20" height="20" viewBox="0 0 20 20"><circle cx="10" cy="10" r="5.500" fill="none" stroke="#4c4c4c"/><path d="M10 4.500v3" stroke="#4c4c4c"/></svg>
<svg class="a" style="left:861.5px;top:78.5px" width="20" height="20" viewBox="0 0 20 20"><path d="M3 10c3-4.500 11-4.500 14 0-3 4.500-11 4.500-14 0z" fill="none" stroke="#4c4c4c"/><circle cx="10" cy="10" r="2" fill="#4c4c4c"/></svg>
<svg class="a" style="left:888px;top:78.5px" width="20" height="20" viewBox="0 0 20 20"><path d="M10 4v12M4 10h4M12 10h4M6.500 8L8 10l-1.500 2M13.500 8L12 10l1.500 2" fill="none" stroke="#4c4c4c"/></svg>
<svg class="a" style="left:914.5px;top:78.5px" width="20" height="20" viewBox="0 0 20 20"><circle cx="10" cy="10" r="5" fill="none" stroke="#4c4c4c"/><path d="M7 13l6-6" stroke="#4c4c4c"/></svg>
<div class="a" style="left:946px;top:78.8px;width:35.5px;height:18.8px;background:#3d3d3d;border-radius:2px;"></div>
<svg class="a" style="left:953.5px;top:78px" width="21" height="21" viewBox="0 0 21 21"><rect x="2.500" y="2.500" width="16" height="16" fill="none" stroke="#9a9a9a" stroke-width="0.900"/><g fill="#9a9a9a"><circle cx="2.500" cy="2.500" r="1.100"/><circle cx="18.500" cy="2.500" r="1.100"/><circle cx="2.500" cy="18.500" r="1.100"/><circle cx="18.500" cy="18.500" r="1.100"/></g><path d="M6 10a4.500 4.500 0 0 1 8-2.500M15 11a4.500 4.500 0 0 1-8 2.500M14.500 4.500v3.200h-3.200M6.500 16.500v-3.200h3.200" fill="none" stroke="#e4e4e4" stroke-width="1.300"/></svg>
<div class="t" style="left:986.0px;top:83.0px;font-size:13px;color:#ededed;letter-spacing:-0.994px;">Snap:</div>
<div class="a" style="left:1025px;top:78.8px;width:79.5px;height:18.8px;background:#3d3d3d;border-radius:2px;"></div><div class="a" style="left:1050.8px;top:78.8px;width:1px;height:18.8px;background:#343434;"></div><div class="a" style="left:1077.4px;top:78.8px;width:1px;height:18.8px;background:#343434;"></div>
<div class="a" style="left:1051.8px;top:78.8px;width:25.6px;height:18.8px;background:#272727;"></div>
<svg class="a" style="left:1028px;top:78.5px" width="20" height="20" viewBox="0 0 20 20"><path d="M4 3c3 4 3 10 0 14M16 3c-3 4-3 10 0 14" fill="none" stroke="#e6e6e6" stroke-width="1.300"/><path d="M6.500 10h7" stroke="#3e8fd6" stroke-width="1.300"/><circle cx="6.300" cy="10" r="1.300" fill="#bdbdbd"/><circle cx="13.700" cy="10" r="1.300" fill="#bdbdbd"/></svg>
<svg class="a" style="left:1054.5px;top:78.5px" width="20" height="20" viewBox="0 0 20 20"><path d="M4 4c7 0 12 5 12 12" fill="none" stroke="#e6e6e6" stroke-width="1.300"/><circle cx="4" cy="4" r="1.400" fill="none" stroke="#e6e6e6"/><circle cx="16" cy="16" r="1.400" fill="none" stroke="#e6e6e6"/><path d="M6 16l7-7M9 9h4v4" fill="none" stroke="#3e8fd6" stroke-width="1.500"/></svg>
<svg class="a" style="left:1081px;top:78.5px" width="20" height="20" viewBox="0 0 20 20"><path d="M7 2v16M2 6h16" stroke="#3e8fd6" stroke-width="1.300"/><path d="M4 17c7 0 11-5 12-12" fill="none" stroke="#d6d6d6" stroke-width="1.200"/><circle cx="4" cy="17" r="1.300" fill="none" stroke="#d6d6d6"/><circle cx="16" cy="5" r="1.300" fill="none" stroke="#d6d6d6"/></svg>
<div class="a" style="left:1115px;top:78.8px;width:26px;height:18.8px;background:#3d3d3d;border-radius:2px;"></div>
<svg class="a" style="left:1118px;top:78.5px" width="20" height="20" viewBox="0 0 20 20"><path d="M14 2v16M3 6h16" stroke="#3e8fd6" stroke-width="1.300"/><path d="M3 5l7 5-3 7M10 10l5 5" fill="none" stroke="#ececec" stroke-width="1.300"/></svg>
<div class="a" style="left:1151.5px;top:78.8px;width:26.5px;height:18.8px;background:#3d3d3d;border-radius:2px;"></div>
<svg class="a" style="left:1155px;top:78.5px" width="20" height="20" viewBox="0 0 20 20"><path d="M4 9l9 7-1-9z" fill="none" stroke="#3e8fd6" stroke-width="1.300"/><path d="M4 9L13 3" stroke="#dcdcdc" stroke-width="1.200"/><circle cx="13" cy="3" r="1.500" fill="#ececec"/><circle cx="4" cy="9" r="1.300" fill="#3d3d3d" stroke="#dcdcdc"/><circle cx="13" cy="16" r="1.300" fill="#3d3d3d" stroke="#dcdcdc"/></svg>
<div class="a" style="left:1187px;top:79px;width:1px;height:20px;background:#252525;"></div>
<div class="a" style="left:1194.5px;top:83.5px;width:10.5px;height:10.5px;background:#5b5b5b;border-radius:1.5px;"></div>
<div class="t" style="left:1209.5px;top:83.8px;font-size:12px;color:#ededed;letter-spacing:-0.597px;">Show Orientation</div>
<div class="a" style="left:296.5px;top:103px;width:468.5px;height:22px;background:#3d3d3d;"></div>
<div class="a" style="left:766px;top:103px;width:467px;height:22px;background:#2b2b2b;"></div>
<div class="t" style="left:304.8px;top:109.5px;font-size:12px;color:#f0f0f0;letter-spacing:-0.951px;">BUSINESS CARD FRONT.pdf [Modified] (6039.5%)</div>
<div class="t" style="left:774.5px;top:109.5px;font-size:12px;color:#f0f0f0;letter-spacing:-0.463px;">&lt;Untitled&gt; [Modified] (63.9%)</div>
<svg class="a" style="left:748.5px;top:109.5px" width="10" height="10" viewBox="0 0 10 10"><path d="M1.500 1.500l7 7M8.500 1.500l-7 7" stroke="#efefef" stroke-width="1.300"/></svg>
<svg class="a" style="left:1215.5px;top:109.5px" width="10" height="10" viewBox="0 0 10 10"><path d="M1.500 1.500l7 7M8.500 1.500l-7 7" stroke="#efefef" stroke-width="1.300"/></svg>
<div class="a" style="left:36.8px;top:102.5px;width:1.2px;height:670.5px;background:#2a2a2a;"></div>
<svg class="a" style="left:6px;top:106px" width="24" height="24" viewBox="0 0 24 24"><path d="M8.700 6.200v11.800l2.900-2.500 1.900 4.100 2-.9-1.900-4 3.700-.300z" fill="#1c1c1c" stroke="#9a9a9a" stroke-width="1.100" stroke-linejoin="round"/></svg>
<svg class="a" style="left:6px;top:132.6px" width="24" height="24" viewBox="0 0 24 24"><rect x="5" y="5.500" width="15" height="14" fill="none" stroke="#3b9be8" stroke-width="1.300" stroke-dasharray="2.500 1.600"/><rect x="7" y="8" width="11" height="9" fill="#b5b5b0" stroke="#8c8c88" stroke-width="0.800"/><path d="M7 11h11M7 14h11" stroke="#8f8f8a" stroke-width="0.700"/><path d="M5 2.500v5M2.500 5h5" stroke="#3b9be8" stroke-width="1.500"/></svg>
<div class="a" style="left:5px;top:159px;width:26px;height:26px;background:#1e1e1e;border-radius:3.5px;"></div>
<svg class="a" style="left:6px;top:159.2px" width="24" height="24" viewBox="0 0 24 24"><path d="M7.500 8v10.800l8.200-5.400z" fill="#fbfbfb"/><path d="M23.500 19.500v4h-4z" fill="#dcdcdc"/></svg>
<svg class="a" style="left:6px;top:185.8px" width="24" height="24" viewBox="0 0 24 24"><path d="M4 5l10 10" stroke="#3b9be8" stroke-width="1.200"/><path d="M6.500 18.500c0-5 1-7.500 3-9 2-1.500 5-1.800 8.500-1.800" fill="none" stroke="#e5e5e5" stroke-width="1.300"/><rect x="7.300" y="8.200" width="3.400" height="3.400" fill="#6cb6ef" stroke="#2f83cf" stroke-width="0.800"/><rect x="5.300" y="17.300" width="2.400" height="3.600" rx="0.800" fill="#f0f0f0"/><path d="M16.500 5.800l3.200 1.900-3.200 1.900z" fill="#f0f0f0"/></svg>
<svg class="a" style="left:6px;top:212.4px" width="24" height="24" viewBox="0 0 24 24"><circle cx="11.500" cy="13" r="8" fill="none" stroke="#d8d8d8" stroke-width="1.100"/><circle cx="11.500" cy="13" r="5.700" fill="none" stroke="#3476b6" stroke-width="2.600"/><circle cx="11.500" cy="13" r="2.800" fill="#2a2a2a" stroke="#d8d8d8" stroke-width="1.100"/><path d="M11.500 13L19.500 6.500" stroke="#e86a9a" stroke-width="1.700"/><path d="M20.500 5.500l-3.600.700 2.700 2.700z" fill="#e86a9a"/></svg>
<svg class="a" style="left:6px;top:239px" width="24" height="24" viewBox="0 0 24 24"><g transform="rotate(40 12 12)"><path d="M12 22.500c-3-4-4.500-7-4.500-9.500l2-3.500h5l2 3.500c0 2.500-1.500 5.500-4.500 9.500z" fill="#e9b54d" stroke="#8a6420" stroke-width="0.700"/><path d="M12 21v-6.500" stroke="#3a2a10" stroke-width="1"/><circle cx="12" cy="14" r="1.100" fill="#3a2a10"/><rect x="9" y="6.500" width="6" height="3" fill="#e9e9e9" stroke="#888" stroke-width="0.500"/><path d="M9.500 6.500c0-3 1-4.500 2.500-4.500s2.500 1.500 2.500 4.500z" fill="#a03228"/></g></svg>
<svg class="a" style="left:6px;top:265.6px" width="24" height="24" viewBox="0 0 24 24"><g transform="rotate(45 12 11)"><rect x="9.700" y="0.500" width="4.600" height="3" fill="#e8605a"/><rect x="9.700" y="3.500" width="4.600" height="1.600" fill="#d9d9d9"/><rect x="9.700" y="5" width="4.600" height="11.500" fill="#2c86d8"/><rect x="11.200" y="5" width="1.500" height="11.500" fill="#58a8ee"/><path d="M9.700 16.500h4.600L12 21.500z" fill="#e3b071"/><path d="M11.200 19.700h1.600L12 21.500z" fill="#333"/></g><path d="M5 20.500c3 1.500 5-2 8-1.500s3 2 6 1.500" fill="none" stroke="#e0e0e0" stroke-width="1"/></svg>
<svg class="a" style="left:6px;top:292.2px" width="24" height="24" viewBox="0 0 24 24"><g transform="rotate(50 12 10)"><rect x="10.800" y="-1.500" width="2.600" height="7" rx="1.200" fill="#e2353a"/><rect x="10.600" y="5" width="3" height="3" fill="#cfcfcf"/><path d="M9.300 8h5.600c.8 3 .6 6-2.800 9.500-3.400-3.500-3.600-6.500-2.800-9.500z" fill="#b36a2e"/><path d="M11 8h2c.4 3 .2 5.500-1 8z" fill="#d4884a"/></g><path d="M3.500 15.500l4.500 4.500c3 1.500 5-2 8-1.500 2 .4 3 .5 4.500-.5" fill="none" stroke="#2b7fd0" stroke-width="1.300"/><path d="M2.500 14.500l5 5" stroke="#e0e0e0" stroke-width="0.900"/><circle cx="7.500" cy="19.700" r="1.200" fill="#e6e6e6"/></svg>
<svg class="a" style="left:6px;top:318.8px" width="24" height="24" viewBox="0 0 24 24"><path d="M11 14L8.00 6.58A8 8 0 0 1 14.13 6.64z" fill="#e83a3a"/><path d="M11 14L14.13 6.64A8 8 0 0 1 18.42 11.00z" fill="#f08a2a"/><path d="M11 14L18.42 11.00A8 8 0 0 1 18.36 17.13z" fill="#f2d52c"/><path d="M11 14L18.36 17.13A8 8 0 0 1 14.00 21.42z" fill="#6bc93f"/><path d="M11 14L14.00 21.42A8 8 0 0 1 7.87 21.36z" fill="#2fbf8f"/><path d="M11 14L7.87 21.36A8 8 0 0 1 3.58 17.00z" fill="#2f8fe0"/><path d="M11 14L3.58 17.00A8 8 0 0 1 3.64 10.87z" fill="#6a4fd6"/><path d="M11 14L3.64 10.87A8 8 0 0 1 8.00 6.58z" fill="#c23fc9"/><circle cx="11" cy="14" r="2.600" fill="#2d2d2d"/><path d="M11 14L19.500 5.500" stroke="#f2f2f2" stroke-width="1.400"/><circle cx="11" cy="14" r="1.200" fill="#f2f2f2"/><circle cx="19.500" cy="5.500" r="1.500" fill="#f2f2f2"/></svg>
<svg class="a" style="left:6px;top:345.4px" width="24" height="24" viewBox="0 0 24 24"><path d="M8 3.500h8c.8 5 .2 10-4 10s-4.800-5-4-10z" fill="#e9ecf6" stroke="#b9bed2" stroke-width="0.700"/><path d="M8.300 8.500c.4 3 1.500 5 3.700 5s3.300-2 3.700-5z" fill="#aab3d6"/><path d="M12 13.500v6" stroke="#cfd3e2" stroke-width="1.400"/><path d="M8.500 20h7" stroke="#cfd3e2" stroke-width="1.500"/></svg>
<svg class="a" style="left:6px;top:372px" width="24" height="24" viewBox="0 0 24 24"><rect x="3.500" y="5.500" width="17" height="13" fill="#1a2d5a" stroke="#a9a9a9" stroke-width="1.200"/><rect x="4.200" y="6.200" width="15.600" height="5.500" fill="#3f8fe0"/><path d="M4.200 14c4-2.500 7-1 10-2.500 2.500-1 4 0 5.600-.5v3H4.200z" fill="#21457f"/><circle cx="16.300" cy="8.500" r="1.700" fill="#f5b62a"/><path d="M7 10.500l2.500-2.500 2.500 2.500z" fill="#f2f2f2"/></svg>
<svg class="a" style="left:6px;top:398.6px" width="24" height="24" viewBox="0 0 24 24"><path d="M7.500 3.500v13.500h13.500M3.500 7.500h13.500v13.500" fill="none" stroke="#b9b9b9" stroke-width="1.500"/><path d="M4 20.500L20.500 4" stroke="#b9b9b9" stroke-width="1.100"/></svg>
<svg class="a" style="left:6px;top:425.2px" width="24" height="24" viewBox="0 0 24 24"><defs><linearGradient id="bg12" x1="0" y1="0" x2="0" y2="1"><stop offset="0" stop-color="#3e9fea"/><stop offset="1" stop-color="#1b76cc"/></linearGradient></defs><rect x="5" y="5" width="14" height="14" fill="url(#bg12)"/></svg>
<svg class="a" style="left:6px;top:451.8px" width="24" height="24" viewBox="0 0 24 24"><defs><linearGradient id="bg13" x1="0" y1="0" x2="0" y2="1"><stop offset="0" stop-color="#3e9fea"/><stop offset="1" stop-color="#1b76cc"/></linearGradient></defs><circle cx="12" cy="12" r="7" fill="url(#bg13)"/></svg>
<svg class="a" style="left:6px;top:478.4px" width="24" height="24" viewBox="0 0 24 24"><defs><linearGradient id="bg14" x1="0" y1="0" x2="0" y2="1"><stop offset="0" stop-color="#3e9fea"/><stop offset="1" stop-color="#1b76cc"/></linearGradient></defs><rect x="5" y="5" width="14" height="14" rx="3.500" fill="url(#bg14)"/></svg>
<svg class="a" style="left:6px;top:505px" width="24" height="24" viewBox="0 0 24 24"><defs><linearGradient id="bg15" x1="0" y1="0" x2="0" y2="1"><stop offset="0" stop-color="#3e9fea"/><stop offset="1" stop-color="#1b76cc"/></linearGradient></defs><path d="M12 4.500l7 13.500H5z" fill="url(#bg15)"/><path d="M24 20v4h-4z" fill="#dcdcdc"/></svg>
<div class="t" style="left:9.500px;top:531.1px;font-family:'Liberation Serif',serif;font-size:23px;color:#c4c4c4">A</div>
<svg class="a" style="left:25.5px;top:551.6px" width="5" height="5" viewBox="0 0 5 5"><path d="M4.500 0v4.500H0z" fill="#dcdcdc"/></svg>
<svg class="a" style="left:6px;top:558.2px" width="24" height="24" viewBox="0 0 24 24"><g transform="rotate(40 12 12)"><path d="M10.300 3c0-2 3.400-2 3.400 0v4h-3.400z" fill="#c88a2e"/><rect x="8.800" y="7" width="6.400" height="2.600" rx="1" fill="#d69a3a"/><path d="M10.300 9.600h3.400v7L12 22l-1.700-5.400z" fill="#8a8a8a"/><path d="M11.300 9.600h1.200v8l-.5 2z" fill="#c5c5c5"/></g></svg>
<svg class="a" style="left:6px;top:584.8px" width="24" height="24" viewBox="0 0 24 24"><path d="M7.500 21.500c-2-2-3.500-4.500-5-6.500 1-1 2.500-.5 4 1V6.500c0-1.300 1.900-1.300 2 0v5V4.500c0-1.400 2-1.400 2.100 0v6.800V5.500c0-1.300 1.900-1.300 2 0v6.500V8c0-1.300 1.900-1.300 1.900 0v8c0 3-1.500 5.500-3 5.500z" fill="#f3c29f" stroke="#d79a72" stroke-width="0.700" stroke-linejoin="round"/></svg>
<svg class="a" style="left:6px;top:611.4px" width="24" height="24" viewBox="0 0 24 24"><path d="M14 14.500l6 6" stroke="#c8843a" stroke-width="2.400" stroke-linecap="round"/><circle cx="10" cy="10.500" r="6.300" fill="#8ec6f5" stroke="#e9e9e9" stroke-width="1.700"/><path d="M6.500 9c.5-2 2-3 4-3" fill="none" stroke="#d9eefd" stroke-width="1.300"/></svg>
<div class="a" style="left:38px;top:102.5px;width:256.5px;height:23.5px;background:#262626;"></div>
<div class="a" style="left:43.7px;top:109px;width:1px;height:9px;background:#555;"></div>
<div class="a" style="left:55px;top:103.5px;width:39.5px;height:22.5px;background:#3b3b3b;"></div>
<div class="t" style="left:59.0px;top:108.2px;font-size:12px;color:#f4f4f4;letter-spacing:-0.835px;">Assets</div>
<div class="t" style="left:98.7px;top:108.2px;font-size:12px;color:#c9c9c9;letter-spacing:-0.772px;">Appearance</div>
<svg class="a" style="left:277px;top:109px" width="13" height="10" viewBox="0 0 13 10"><path d="M1 1.500h8M1 4h8M1 6.500h8" stroke="#dcdcdc" stroke-width="1.300"/><path d="M9.500 7h3l-1.500 2z" fill="#dcdcdc"/></svg>
<div class="a" style="left:38px;top:126px;width:256.5px;height:23.5px;background:#3b3b3b;"></div>
<div class="a" style="left:42px;top:129.5px;width:116px;height:17px;background:#343434;border-radius:3px;border:1px solid #2a2a2a;"></div>
<div class="t" style="left:47.0px;top:132.5px;font-size:12px;color:#e9e9e9;letter-spacing:-0.864px;">iOS 12</div>
<svg class="a" style="left:146px;top:135.5px" width="8" height="6" viewBox="0 0 8 6"><path d="M0.500 1h7L4 5z" fill="#f0f0f0"/></svg>
<div class="a" style="left:38px;top:149.5px;width:256.5px;height:1px;background:#2c2c2c;"></div>
<div class="a" style="left:38px;top:150.5px;width:238.5px;height:271.5px;background:#333333;"></div>
<div class="a" style="left:276.5px;top:150.5px;width:18px;height:271.5px;background:#3a3a3a;"></div>
<svg class="a" style="left:281px;top:155.5px" width="9" height="8" viewBox="0 0 9 8"><path d="M4.500 0.500L8.500 7.500h-8z" fill="#6a6a6a"/></svg>
<div class="a" style="left:282.5px;top:174.5px;width:6.5px;height:72px;background:#6e6e6e;border-radius:3.3px;"></div>
<div class="a" style="left:38px;top:150.500px;width:238px;height:30px;overflow:hidden">
<div class="a" style="left:11.7px;top:-11.9px;width:38px;height:38px;border-radius:50%;background:#3d3d3d"></div>
<div class="a" style="left:70px;top:-11.9px;width:38px;height:38px;border-radius:50%;background:#3d3d3d"></div>
<div class="a" style="left:128.8px;top:-11.9px;width:38px;height:38px;border-radius:50%;background:#2f96f8"></div>
<div class="a" style="left:187.6px;top:-11.9px;width:38px;height:38px;border-radius:50%;background:#fd8d33"></div>
</div>
<svg class="a" style="left:59px;top:150.5px" width="20" height="15" viewBox="0 0 20 15"><g fill="#f2f2f2"><rect x="4.500" y="1.500" width="13" height="1.800"/><rect x="4.500" y="6.200" width="13" height="1.800"/><rect x="4.500" y="10.800" width="13" height="1.800"/><circle cx="1.800" cy="2.400" r="1.200"/><circle cx="1.800" cy="7.100" r="1.200"/><circle cx="1.800" cy="11.700" r="1.200"/></g></svg>
<svg class="a" style="left:118px;top:150.5px" width="18" height="16" viewBox="0 0 18 16"><path d="M16.500 0L2 7h7.500v7.500z" fill="#9a9a9a"/></svg>
<svg class="a" style="left:176px;top:150.5px" width="20" height="16" viewBox="0 0 20 16"><path d="M4 0h8v12h-8z" fill="#f5f5f5"/><rect x="5.500" y="0" width="5" height="4" fill="#2f96f8"/><rect x="2.500" y="12.500" width="11" height="1.600" fill="#f5f5f5"/><path d="M12 3c3 0 3.500 1.500 3.500 4v4c0 1.500 2 1.500 2 0V4l-2-3" fill="none" stroke="#f5f5f5" stroke-width="1.100"/></svg>
<svg class="a" style="left:234px;top:150.5px" width="22" height="16" viewBox="0 0 22 16"><path d="M3 0h12c0 6-2 9.500-6 9.500S3 6 3 0z" fill="#f7f7f7"/><path d="M15 2.500c3-1 4.500.5 4.500 2s-2 3.500-5 3" fill="none" stroke="#f7f7f7" stroke-width="1.200"/><rect x="1.500" y="11.500" width="16" height="1.400" fill="#f7f7f7"/></svg>
<div class="a" style="left:49.7px;top:197.3px;width:38px;height:38px;border-radius:50%;background:#fd8d33;"></div>
<svg class="a" style="left:58.7px;top:205.3px" width="20" height="22" viewBox="0 0 20 22"><path d="M4.200 1.500v6.500M6.500 1.500v6.500M8.800 1.500v6.500M4.200 7.500c0 2.500 4.600 2.500 4.600 0M6.500 9v11" stroke="#fafafa" stroke-width="1.500" fill="none" stroke-linecap="round"/><path d="M14.500 20V1.500c-3 2-3.500 7-2.500 11h2.500" fill="#fafafa" stroke="#fafafa" stroke-width="1.100" stroke-linejoin="round"/></svg>
<div class="a" style="left:108px;top:197.3px;width:38px;height:38px;border-radius:50%;background:#3b3b3b;"></div>
<svg class="a" style="left:116px;top:207.3px" width="22" height="18" viewBox="0 0 22 18"><path d="M1 6.500h3.500L9 2.500v13L4.500 11.500H1z" fill="#f5f5f5"/><path d="M11.500 6c1 1.500 1 4.500 0 6M14 4c2 3 2 7 0 10M16.800 2c3 4 3 10 0 14" stroke="#f5f5f5" stroke-width="1.300" fill="none" stroke-linecap="round"/></svg>
<div class="a" style="left:166.8px;top:197.3px;width:38px;height:38px;border-radius:50%;background:#0a7bfd;"></div>
<svg class="a" style="left:174.8px;top:207.3px" width="22" height="18" viewBox="0 0 22 18"><path d="M9 1L1.500 8l7.500 7v-4.200c4.500-.5 8 1.500 10.500 5.200-.5-6.500-4-10.500-10.500-11z" fill="#fbfbfb"/></svg>
<div class="a" style="left:225.6px;top:197.3px;width:38px;height:38px;border-radius:50%;background:#fc9404;"></div>
<svg class="a" style="left:236.6px;top:206.3px" width="16" height="20" viewBox="0 0 16 20"><path d="M2.500 1.500v17.500" stroke="#fbfbfb" stroke-width="1.800"/><path d="M2.500 2.500c4-2 7 1.500 11.500-.5v8.500c-4.500 2-7.500-1.500-11.500.5z" fill="#fbfbfb"/></svg>
<div class="a" style="left:49.7px;top:255.7px;width:38px;height:38px;border-radius:50%;background:#fb3126;"></div>
<svg class="a" style="left:60.7px;top:264.7px" width="16" height="20" viewBox="0 0 16 20"><path d="M1.500 4.200h13M5.500 4V2.500h5V4" stroke="#fbfbfb" stroke-width="1.400" fill="none"/><path d="M2.800 6h10.400l-.9 12.500H3.700z" fill="none" stroke="#fbfbfb" stroke-width="1.400"/><path d="M5.800 7.500v9.500M8 7.500v9.500M10.200 7.500v9.500" stroke="#fbfbfb" stroke-width="1.100"/></svg>
<div class="a" style="left:108px;top:255.7px;width:38px;height:38px;border-radius:50%;background:#3b6ea8;"></div>
<svg class="a" style="left:117px;top:265.7px" width="20" height="18" viewBox="0 0 20 18"><rect x="1" y="1.500" width="18" height="4" rx="1" fill="#fbfbfb"/><rect x="2" y="6.200" width="16" height="10.500" rx="1" fill="#fbfbfb"/><rect x="7" y="8.300" width="6" height="1.600" fill="#3b6ea8"/></svg>
<div class="a" style="left:166.8px;top:255.7px;width:38px;height:38px;border-radius:50%;overflow:hidden"><svg width="38" height="38" viewBox="0 0 38 38"><circle cx="19" cy="21" r="2" fill="none" stroke="#d23553" stroke-width="1.050"/><circle cx="19" cy="21" r="4.1" fill="none" stroke="#d23553" stroke-width="1.050"/><circle cx="19" cy="21" r="6.2" fill="none" stroke="#d23553" stroke-width="1.050"/><circle cx="19" cy="21" r="8.3" fill="none" stroke="#d23553" stroke-width="1.050"/><circle cx="19" cy="21" r="10.4" fill="none" stroke="#d23553" stroke-width="1.050"/><circle cx="19" cy="21" r="12.5" fill="none" stroke="#d23553" stroke-width="1.050"/><circle cx="19" cy="21" r="14.6" fill="none" stroke="#d23553" stroke-width="1.050"/><circle cx="19" cy="21" r="16.7" fill="none" stroke="#d23553" stroke-width="1.050"/><circle cx="19" cy="21" r="18.8" fill="none" stroke="#d23553" stroke-width="1.050"/></svg></div>
<svg class="a" style="left:225.6px;top:255.7px" width="38" height="38" viewBox="0 0 38 38"><rect x="17.800" y="1.500" width="2.500" height="9.500" rx="1.200" fill="#8d93a3" opacity="0.95" transform="rotate(210 19 19)"/><rect x="17.800" y="1.500" width="2.500" height="9.500" rx="1.200" fill="#8d93a3" opacity="0.85" transform="rotate(180 19 19)"/><rect x="17.800" y="1.500" width="2.500" height="9.500" rx="1.200" fill="#8d93a3" opacity="0.75" transform="rotate(150 19 19)"/><rect x="17.800" y="1.500" width="2.500" height="9.500" rx="1.200" fill="#8d93a3" opacity="0.65" transform="rotate(120 19 19)"/><rect x="17.800" y="1.500" width="2.500" height="9.500" rx="1.200" fill="#8d93a3" opacity="0.55" transform="rotate(90 19 19)"/><rect x="17.800" y="1.500" width="2.500" height="9.500" rx="1.200" fill="#8d93a3" opacity="0.45" transform="rotate(60 19 19)"/><rect x="17.800" y="1.500" width="2.500" height="9.500" rx="1.200" fill="#8d93a3" opacity="0.35" transform="rotate(30 19 19)"/><rect x="17.800" y="1.500" width="2.500" height="9.500" rx="1.200" fill="#8d93a3" opacity="0.25" transform="rotate(0 19 19)"/><rect x="17.800" y="1.500" width="2.500" height="9.500" rx="1.200" fill="#8d93a3" opacity="0.18" transform="rotate(330 19 19)"/><rect x="17.800" y="1.500" width="2.500" height="9.500" rx="1.200" fill="#8d93a3" opacity="0.12" transform="rotate(300 19 19)"/><rect x="17.800" y="1.500" width="2.500" height="9.500" rx="1.200" fill="#8d93a3" opacity="0.08" transform="rotate(270 19 19)"/><rect x="17.800" y="1.500" width="2.500" height="9.500" rx="1.200" fill="#8d93a3" opacity="0.05" transform="rotate(240 19 19)"/></svg>
<div class="a" style="left:49.95px;top:315.05px;width:37.5px;height:37.5px;border-radius:50%;background:linear-gradient(180deg,#6b6b70 0%,#9a9a9e 50%,#d6d6d8 100%);border:1.500px solid #e2e2e2;overflow:hidden;"></div>
<svg class="a" style="left:51.7px;top:316.8px" width="34" height="34" viewBox="0 0 34 34"><defs><clipPath id="avc"><circle cx="17" cy="17" r="17"/></clipPath></defs><g clip-path="url(#avc)"><path d="M17 7c3.500 0 5.500 2.500 5.500 6 0 2-.5 3.500-1.500 5v2.500c0 1.500 8 2.500 9 6v8H4v-8c1-3.500 9-4.500 9-6V18c-1-1.500-1.500-3-1.500-5 0-3.500 2-6 5.500-6z" fill="#2e2e30"/></g></svg>
<div class="a" style="left:108.25px;top:315.05px;width:37.5px;height:37.5px;border-radius:50%;background:#2b3a4e;"></div>
<div class="a" style="left:122.75px;top:329.55px;width:8.5px;height:8.5px;border-radius:50%;background:#1a7cf5;border:1.500px solid #fff;"></div>
<svg class="a" style="left:166px;top:318px" width="50" height="26" viewBox="0 0 50 26"><path d="M9.500 7.500c1.500-1.500 3.500-1.300 4.500.2-2.500 1.500-2.200 5 .5 6-1 3-2.500 5-4 5-1.200 0-1.700-.700-3-.700s-1.900.700-3 .700c-2 0-4.500-4-4.500-7.500 0-3.500 2-5 4-5 1.300 0 2.400.800 3.200.800.700 0 1.400-.3 2.300.5z" fill="#fafafa"/><path d="M7.200 6c-.2-2 1.500-4 3.300-4.300.3 2.200-1.500 4.200-3.300 4.300z" fill="#fafafa"/><path d="M22.500 19V4.500h4.200c5.500 0 5.500 8 0 8h-4.200" fill="none" stroke="#fafafa" stroke-width="1.300"/><path d="M33.500 10.800c2.200-2 7-1.800 7 1.800M40.500 14.300h-3.800c-3.600 0-3.600 4.800 0 4.800 1.600 0 3-.600 3.800-1.800" fill="none" stroke="#fafafa" stroke-width="1.200"/><path d="M44 8.500l.500 2.200" stroke="#fafafa" stroke-width="1.200"/></svg>
<div class="a" style="left:231px;top:315px;width:26px;height:26px;border-radius:50%;background:#868686;"></div>
<div class="t" style="left:238.4px;top:343.4px;font-size:4.2px;color:#d0d0d0;">Name</div>
<div class="t" style="left:234.1px;top:348.3px;font-size:4.2px;color:#d0d0d0;">iPhone SE</div>
<div class="a" style="left:55.45px;top:373.05px;width:26.5px;height:26.5px;border-radius:50%;background:#868686;"></div>
<div class="t" style="left:63.1px;top:401.9px;font-size:4.2px;color:#d0d0d0;">Name</div>
<div class="t" style="left:60.4px;top:406.8px;font-size:4.2px;color:#d0d0d0;">iPhone 8</div>
<div class="a" style="left:113.05px;top:375.75px;width:24.5px;height:24.5px;border-radius:50%;background:#868686;"></div>
<div class="a" style="left:128.5px;top:374.2px;width:13px;height:8px;background:#f4436c;border-radius:4px;"></div>
<div class="t" style="left:130.8px;top:376.6px;font-size:5.5px;color:#ffd6df;">123</div>
<div class="t" style="left:119.7px;top:402.1px;font-size:4.2px;color:#d0d0d0;">Name</div>
<div class="t" style="left:117.2px;top:407.0px;font-size:4.2px;color:#d0d0d0;">iPad Pro</div>
<div class="a" style="left:38px;top:422px;width:256.5px;height:24px;background:#383838;"></div>
<svg class="a" style="left:43px;top:431px" width="7" height="7" viewBox="0 0 7 7"><path d="M6.500 0.500v6h-6z" fill="#6a6a6a"/></svg>
<div class="t" style="left:66.2px;top:428.4px;font-size:13px;color:#f0f0f0;letter-spacing:-0.588px;">Controls</div>
<svg class="a" style="left:256px;top:428.5px" width="13" height="10" viewBox="0 0 13 10"><path d="M1 1.500h8M1 4h8M1 6.500h8" stroke="#dcdcdc" stroke-width="1.300"/><path d="M9.500 7h3l-1.500 2z" fill="#dcdcdc"/></svg>
<div class="a" style="left:38px;top:446px;width:238.5px;height:297px;background:#333333;"></div>
<div class="a" style="left:276.5px;top:446px;width:18px;height:297px;background:#3a3a3a;"></div>
<svg class="a" style="left:281px;top:731px" width="9" height="8" viewBox="0 0 9 8"><path d="M0.500 0.500h8L4.500 7.500z" fill="#8a8a8a"/></svg>
<svg class="a" style="left:50px;top:461px" width="48" height="27" viewBox="0 0 48 27"><path d="M47 1.500H5.500a4 4 0 0 0-4 4v15.500a4 4 0 0 0 4 4H29.500" fill="none" stroke="#d8d8d8" stroke-width="1.150"/></svg>
<svg class="a" style="left:108.5px;top:461px" width="48" height="27" viewBox="0 0 48 27"><path d="M47 1.500H5.500a4 4 0 0 0-4 4v15.500a4 4 0 0 0 4 4H29.500" fill="none" stroke="#1e6fd3" stroke-width="1.150"/></svg>
<svg class="a" style="left:167px;top:461px" width="48" height="27" viewBox="0 0 48 27"><path d="M47 1.500H5.500a4 4 0 0 0-4 4v15.500a4 4 0 0 0 4 4H29.500" fill="none" stroke="#1e6fd3" stroke-width="1.150"/><text x="22.500" y="18.300" font-family="Liberation Sans" font-size="11" fill="#2a7de1">Lab</text><rect x="43" y="3" width="6" height="20" fill="#333"/><path d="M40.500 17.500l2.500-5" stroke="#2a7de1" stroke-width="1.100"/></svg>
<svg class="a" style="left:226px;top:462px" width="47" height="25" viewBox="0 0 47 25"><path d="M4 0H46.600C46 6 43 8.500 38 11c-5 2.500-8 6-9 14H4a4 4 0 0 1-4-4V4a4 4 0 0 1 4-4z" fill="#f7f7f7"/><rect x="39" y="9" width="3" height="5" fill="#6aa2f0"/></svg>
<svg class="a" style="left:50px;top:519.5px" width="48" height="27" viewBox="0 0 48 27"><path d="M47 1.500H5.500a4 4 0 0 0-4 4v15.500a4 4 0 0 0 4 4H29.500" fill="none" stroke="#1e6fd3" stroke-width="1.150"/></svg>
<svg class="a" style="left:108.5px;top:519.5px" width="48" height="27" viewBox="0 0 48 27"><path d="M47 1.500H5.500a4 4 0 0 0-4 4v15.500a4 4 0 0 0 4 4H29.500" fill="none" stroke="#1e6fd3" stroke-width="1.150"/></svg>
<svg class="a" style="left:167px;top:519.5px" width="48" height="27" viewBox="0 0 48 27"><path d="M47 1.500H5.500a4 4 0 0 0-4 4v15.500a4 4 0 0 0 4 4H29.500" fill="none" stroke="#1e6fd3" stroke-width="1.150"/><path d="M13.500 13.500h15" stroke="#1e6fd3" stroke-width="1.400"/><path d="M41 2v12" stroke="#1e6fd3" stroke-width="1.400"/></svg>
<div class="a" style="left:226px;top:521px;width:36px;height:22.5px;background:#4cd964;border-radius:11.5px;"></div>
<div class="a" style="left:241px;top:522.3px;width:20px;height:20px;border-radius:50%;background:#fff;box-shadow:0 1px 2px rgba(0,0,0,.4);"></div>
<div class="a" style="left:51px;top:580px;width:36.5px;height:22.5px;background:#fdfdfd;border-radius:11.5px;box-shadow:inset 0 0 0 1px #d8d8d8;"></div>
<div class="a" style="left:51.75px;top:581.05px;width:20.5px;height:20.5px;border-radius:50%;background:#fff;box-shadow:1.500px 1.500px 2px rgba(0,0,0,.3);"></div>
<div class="a" style="left:108.5px;top:590.8px;width:41px;height:1.2px;background:#1e6fd3;"></div>
<div class="a" style="left:167px;top:590.8px;width:41px;height:1.2px;background:#1e6fd3;"></div>
<svg class="a" style="left:226px;top:579px" width="47" height="25" viewBox="0 0 47 25"><path d="M4 0H46.600C46 6 43 8.500 38 11c-5 2.500-8 6-9 14H4a4 4 0 0 1-4-4V4a4 4 0 0 1 4-4z" fill="#157efb"/></svg>
<div class="a" style="left:49.7px;top:639.8px;width:38.3px;height:22.2px;background:#fbfbfb;"></div>
<div class="a" style="left:64px;top:645px;width:10px;height:1px;background:#e2e2e2;"></div>
<div class="a" style="left:64px;top:648px;width:10px;height:1px;background:#bdbdbd;"></div>
<div class="a" style="left:64px;top:651px;width:10px;height:1px;background:#8a8a8a;"></div>
<div class="a" style="left:64px;top:654px;width:10px;height:1px;background:#bdbdbd;"></div>
<div class="a" style="left:64px;top:657px;width:10px;height:1px;background:#e2e2e2;"></div>
<div class="a" style="left:108.5px;top:632px;width:37.7px;height:37.7px;background:#1e1e1e;border-radius:9px;"></div>
<svg class="a" style="left:117px;top:642px" width="21" height="17" viewBox="0 0 21 17"><path d="M1 4.500h4l1.500-2.500h7L15 4.500h4.500v11H1z" fill="#f5f5f5"/><circle cx="10.200" cy="9.800" r="3.600" fill="#1e1e1e"/><circle cx="10.200" cy="9.800" r="2.600" fill="#f5f5f5"/><circle cx="10.200" cy="9.800" r="1.800" fill="#1e1e1e"/><rect x="2.500" y="3" width="2" height="1" fill="#f5f5f5"/></svg>
<div class="a" style="left:167px;top:632px;width:37.7px;height:37.7px;background:#1e1e1e;border-radius:9px;"></div>
<svg class="a" style="left:179.3px;top:642px" width="13" height="18" viewBox="0 0 13 18"><rect x="1" y="1" width="11" height="16" rx="1.800" fill="none" stroke="#f5f5f5" stroke-width="1.300"/><rect x="3" y="3" width="7" height="2.500" fill="#f5f5f5"/><rect x="3" y="7.2" width="1.800" height="1.800" fill="#f5f5f5"/><rect x="3" y="9.9" width="1.800" height="1.800" fill="#f5f5f5"/><rect x="3" y="12.6" width="1.800" height="1.800" fill="#f5f5f5"/><rect x="5.6" y="7.2" width="1.800" height="1.800" fill="#f5f5f5"/><rect x="5.6" y="9.9" width="1.800" height="1.800" fill="#f5f5f5"/><rect x="5.6" y="12.6" width="1.800" height="1.800" fill="#f5f5f5"/><rect x="8.2" y="7.2" width="1.800" height="1.800" fill="#f5f5f5"/><rect x="8.2" y="9.9" width="1.800" height="1.800" fill="#f5f5f5"/><rect x="8.2" y="12.6" width="1.800" height="1.800" fill="#f5f5f5"/></svg>
<div class="a" style="left:225.7px;top:632px;width:37.7px;height:37.7px;background:#1e1e1e;border-radius:9px;"></div>
<svg class="a" style="left:235.2px;top:641.5px" width="19" height="19" viewBox="0 0 19 19"><path d="M9.500 2.200a7.300 7.300 0 1 1-6.500 4" fill="none" stroke="#f5f5f5" stroke-width="1.500" stroke-linecap="round"/><path d="M9.500 9.500L6.500 6" stroke="#f5f5f5" stroke-width="1.500" stroke-linecap="round"/><circle cx="9.500" cy="9.500" r="1.300" fill="#f5f5f5"/><path d="M9.500 2v2.500" stroke="#f5f5f5" stroke-width="1.300"/></svg>
<div class="a" style="left:50px;top:690.6px;width:37.7px;height:37.7px;background:#1e1e1e;border-radius:9px;"></div>
<svg class="a" style="left:64.5px;top:699.6px" width="9" height="20" viewBox="0 0 9 20"><path d="M1 0.500h7v3.500L6.500 6v12.500h-4V6L1 4z" fill="#f5f5f5"/><rect x="1" y="2" width="7" height="0.800" fill="#1e1e1e"/><circle cx="4.500" cy="9.500" r="0.900" fill="#1e1e1e"/></svg>
<div class="a" style="left:118.6px;top:690.6px;width:17.5px;height:38px;background:#fbfbfb;border-radius:4px;"></div>
<div class="a" style="left:118.6px;top:690.6px;width:17.5px;height:18.2px;background:#1e1e1e;border-radius:4px 4px 0 0;"></div>
<svg class="a" style="left:122px;top:715px" width="11" height="8" viewBox="0 0 11 8"><path d="M0.500 3h1.500L4 1v6L2 5H.5z" fill="#b0b0b0"/><path d="M5.500 2.500c.6 1 .6 2 0 3M7 1.500c1 1.500 1 3.500 0 5" stroke="#b0b0b0" stroke-width="0.700" fill="none"/></svg>
<div class="a" style="left:177.4px;top:690.6px;width:17.5px;height:38px;background:#fbfbfb;border-radius:4px;"></div>
<div class="a" style="left:177.4px;top:690.6px;width:17.5px;height:12.2px;background:#1e1e1e;border-radius:4px 4px 0 0;"></div>
<svg class="a" style="left:181.5px;top:715px" width="9" height="9" viewBox="0 0 9 9"><circle cx="4.500" cy="4.500" r="1.500" fill="#a0a0a0"/><path d="M4.500 0.500v1.500M4.500 7v1.500M0.500 4.500h1.500M7 4.500h1.500M1.700 1.700l1 1M6.300 6.300l1 1M1.700 7.300l1-1M6.300 2.700l1-1" stroke="#a0a0a0" stroke-width="0.600"/></svg>
<svg class="a" style="left:226px;top:696.2px" width="47" height="25" viewBox="0 0 47 25"><path d="M4 0H46.600C46 6 43 8.500 38 11c-5 2.500-8 6-9 14H4a4 4 0 0 1-4-4V4a4 4 0 0 1 4-4z" fill="#1e1e1e"/><rect x="11.500" y="8.500" width="8" height="5.500" rx="0.800" fill="none" stroke="#f0f0f0" stroke-width="1"/><path d="M12.800 16.200h5.400l-2.700-3z" fill="#f0f0f0"/></svg>
<div class="t" style="left:250.8px;top:703.1px;font-size:4.7px;color:#e0e0e0;">Screen</div>
<div class="t" style="left:250.8px;top:709.5px;font-size:4.7px;color:#e0e0e0;">Mirro</div>
<div class="a" style="left:38px;top:743px;width:256.5px;height:29.7px;background:#404040;"></div>
<div class="a" style="left:41px;top:748px;width:250px;height:21px;background:#353535;border-radius:3px;"></div>
<svg class="a" style="left:46px;top:752px" width="13" height="13" viewBox="0 0 13 13"><circle cx="5" cy="5" r="3.800" fill="none" stroke="#e0e0e0" stroke-width="1.300"/><path d="M7.800 7.800l4 4" stroke="#e0e0e0" stroke-width="1.400"/></svg>
<div class="t" style="left:62.6px;top:753.5px;font-size:12px;color:#9a9a9a;letter-spacing:-1.087px;">Search</div>
<div class="a" style="left:1236px;top:102.5px;width:264px;height:23.3px;background:#262626;"></div>
<div class="a" style="left:1243.2px;top:109px;width:1px;height:9px;background:#555;"></div>
<div class="a" style="left:1288.4px;top:103.5px;width:53.4px;height:22.3px;background:#3c3c3c;"></div>
<div class="t" style="left:1257.7px;top:107.9px;font-size:12px;color:#c9c9c9;letter-spacing:-0.535px;">Color</div>
<div class="t" style="left:1345.9px;top:107.9px;font-size:12px;color:#c9c9c9;letter-spacing:-0.697px;">Stroke</div>
<div class="t" style="left:1385.3px;top:107.9px;font-size:12px;color:#c9c9c9;letter-spacing:-1.003px;">Brushes</div>
<svg class="a" style="left:1483.5px;top:109px" width="13" height="10" viewBox="0 0 13 10"><path d="M1 1.500h8M1 4h8M1 6.500h8" stroke="#dcdcdc" stroke-width="1.300"/><path d="M9.500 7h3l-1.500 2z" fill="#dcdcdc"/></svg>
<div class="t" style="left:1292.9px;top:107.9px;font-size:12px;color:#f6f6f6;letter-spacing:-1.003px;">Swatches</div>
<div class="a" style="left:1236px;top:125.8px;width:264px;height:58px;background:#3d3d3d;"></div>
<div class="a" style="left:1250.2px;top:140.8px;width:25px;height:25px;border-radius:50%;background:#1a1a1a;"></div>
<div class="a" style="left:1251.45px;top:142.05px;width:22.5px;height:22.5px;border-radius:50%;background:#000;"></div>
<div class="a" style="left:1257.45px;top:148.05px;width:10.5px;height:10.5px;border-radius:50%;background:#4a4a4a;"></div>
<div class="a" style="left:1262.3px;top:153.6px;width:25px;height:25px;border-radius:50%;background:#2a2a2a;"></div>
<div class="a" style="left:1263.55px;top:154.85px;width:22.5px;height:22.5px;border-radius:50%;background:#000;"></div>
<svg class="a" style="left:1251.7px;top:166.5px" width="12" height="12" viewBox="0 0 12 12"><circle cx="6" cy="6" r="5.200" fill="#fff" stroke="#2c2c2c" stroke-width="0.800"/><path d="M2.600 9.400L9.400 2.600" stroke="#e8353a" stroke-width="1.300"/></svg>
<svg class="a" style="left:1274px;top:141px" width="13" height="13" viewBox="0 0 13 13"><path d="M2 4.500c2.500-3 6-2 7.500 1.500M10.500 8.500c-2.500 3-6 2-7.500-1.500" fill="none" stroke="#cfcfcf" stroke-width="1.100" transform="rotate(35 6.500 6.500)"/><path d="M2.200 1.200l-.4 3.300 3.200-.8zM10.800 11.800l.4-3.300-3.200.8z" fill="#cfcfcf"/></svg>
<svg class="a" style="left:1295px;top:138px" width="22" height="22" viewBox="0 0 22 22"><g transform="rotate(42 11 11)"><path d="M9.300 2.500c0-2.200 3.400-2.200 3.400 0v3.800h-3.400z" fill="#c88a2e"/><rect x="8" y="6.200" width="6" height="2.400" rx="1" fill="#d69a3a"/><path d="M9.500 8.600h3v6.500L11 20.500l-1.500-5.400z" fill="#8a8a8a"/><path d="M10.500 8.600h1v7.500l-.5 2z" fill="#c5c5c5"/></g></svg>
<div class="a" style="left:1315.85px;top:141.15px;width:14.5px;height:14.5px;border-radius:50%;background:#2a2a2a;"></div>
<div class="a" style="left:1316.7px;top:142px;width:12.8px;height:12.8px;border-radius:50%;background:#fd0000;"></div>
<div class="t" style="left:1388.9px;top:153.1px;font-size:12px;color:#e9e9e9;letter-spacing:-0.627px;">Opacity:</div>
<div class="a" style="left:1431.2px;top:148px;width:58.7px;height:18.7px;background:#2f2f2f;border-radius:2.5px;border:1px solid #292929;"></div>
<div class="t" style="left:1436.9px;top:152.9px;font-size:12px;color:#ededed;letter-spacing:-0.945px;">100 %</div>
<svg class="a" style="left:1478.5px;top:154px" width="8" height="6" viewBox="0 0 8 6"><path d="M0.500 1h7L4 5z" fill="#f0f0f0"/></svg>
<div class="a" style="left:1236px;top:183.8px;width:264px;height:216px;background:#383838;"></div>
<div class="t" style="left:1245.8px;top:193.1px;font-size:12px;color:#ededed;letter-spacing:-1.079px;">Recent:</div>
<div class="a" style="left:1287.6px;top:192px;width:143px;height:15px;background:#414141;"></div>
<div class="a" style="left:1287.6px;top:192px;width:14.8px;height:15px;background:#000;"></div>
<div class="a" style="left:1245.8px;top:212.9px;width:144.5px;height:22.6px;background:#363636;border-radius:3px;border:1px solid #2b2b2b;"></div>
<div class="t" style="left:1254.3px;top:218.5px;font-size:12px;color:#ededed;letter-spacing:-1.056px;">PANTONE® Goe™ coated</div>
<svg class="a" style="left:1380px;top:221.5px" width="8" height="6" viewBox="0 0 8 6"><path d="M0.500 1h7L4 5z" fill="#f0f0f0"/></svg>
<svg class="a" style="left:1394px;top:215.5px" width="16" height="16" viewBox="0 0 16 16"><g fill="none" stroke="#bdbdbd" stroke-width="1"><rect x="0.700" y="0.700" width="5.300" height="5.300"/><rect x="8.500" y="0.700" width="5.300" height="5.300"/><rect x="0.700" y="8.500" width="5.300" height="5.300"/></g><g fill="#bdbdbd"><rect x="2.600" y="2.600" width="1.500" height="1.500"/><rect x="10.400" y="2.600" width="1.500" height="1.500"/><rect x="2.600" y="10.400" width="1.500" height="1.500"/></g><path d="M11.200 8.200v6M8.200 11.200h6" stroke="#cfcfcf" stroke-width="1.500"/></svg>
<div class="a" style="left:1429.8px;top:215.9px;width:55.3px;height:14.7px;background:#242424;border-radius:1.5px;"></div>
<svg class="a" style="left:1430.5px;top:216.5px" width="13.4" height="13.5" viewBox="0 0 13.4 13.5"><rect width="13.400" height="13.500" fill="#fbfbfb"/><path d="M0.500 13L13 0.500" stroke="#e8353a" stroke-width="1.300"/></svg>
<div class="a" style="left:1444.2px;top:216.5px;width:13.4px;height:13.5px;background:#000;"></div>
<div class="a" style="left:1457.6px;top:216.5px;width:13.3px;height:13.5px;background:#808080;"></div>
<div class="a" style="left:1470.9px;top:216.5px;width:13.5px;height:13.5px;background:#ffffff;"></div>
<div class="a" style="left:1245.3px;top:243.4px;width:219.6px;height:126.6px;background:#1c1c1c;"></div>
<svg class="a" style="left:1245px;top:243px" width="221" height="128" viewBox="0 0 221 128"><rect x="1.00" y="0.70" width="12.98" height="9.50" fill="#c8b85a"/><rect x="14.68" y="0.70" width="12.98" height="9.50" fill="#bfae3e"/><rect x="28.36" y="0.70" width="12.98" height="9.50" fill="#b5a22a"/><rect x="42.04" y="0.70" width="12.98" height="9.50" fill="#a38c0a"/><rect x="55.72" y="0.70" width="12.98" height="9.50" fill="#8f7a08"/><rect x="69.41" y="0.70" width="12.98" height="9.50" fill="#e8e8d8"/><rect x="83.09" y="0.70" width="12.98" height="9.50" fill="#d9d6b4"/><rect x="96.77" y="0.70" width="12.98" height="9.50" fill="#c4bc82"/><rect x="110.45" y="0.70" width="12.98" height="9.50" fill="#a89e58"/><rect x="124.13" y="0.70" width="12.98" height="9.50" fill="#8f8840"/><rect x="137.81" y="0.70" width="12.98" height="9.50" fill="#72641e"/><rect x="151.49" y="0.70" width="12.98" height="9.50" fill="#5a4a14"/><rect x="165.18" y="0.70" width="12.98" height="9.50" fill="#d4b00a"/><rect x="178.86" y="0.70" width="12.98" height="9.50" fill="#bf9c08"/><rect x="192.54" y="0.70" width="12.98" height="9.50" fill="#a88a0a"/><rect x="206.22" y="0.70" width="12.98" height="9.50" fill="#8f7608"/><rect x="1.00" y="10.60" width="12.98" height="13.80" fill="#6e5e14"/><rect x="14.68" y="10.60" width="12.98" height="13.80" fill="#5e4e18"/><rect x="28.36" y="10.60" width="12.98" height="13.80" fill="#463c1c"/><rect x="42.04" y="10.60" width="12.98" height="13.80" fill="#f2ecb4"/><rect x="55.72" y="10.60" width="12.98" height="13.80" fill="#f5e88a"/><rect x="69.41" y="10.60" width="12.98" height="13.80" fill="#f7e25e"/><rect x="83.09" y="10.60" width="12.98" height="13.80" fill="#f9dd3a"/><rect x="96.77" y="10.60" width="12.98" height="13.80" fill="#fbdc04"/><rect x="110.45" y="10.60" width="12.98" height="13.80" fill="#fdcf00"/><rect x="124.13" y="10.60" width="12.98" height="13.80" fill="#fdb900"/><rect x="137.81" y="10.60" width="12.98" height="13.80" fill="#efe8c8"/><rect x="151.49" y="10.60" width="12.98" height="13.80" fill="#f2e8a6"/><rect x="165.18" y="10.60" width="12.98" height="13.80" fill="#f5e57e"/><rect x="178.86" y="10.60" width="12.98" height="13.80" fill="#fadc48"/><rect x="192.54" y="10.60" width="12.98" height="13.80" fill="#fdd500"/><rect x="206.22" y="10.60" width="12.98" height="13.80" fill="#fdc400"/><rect x="1.00" y="24.80" width="12.98" height="13.40" fill="#fdaf00"/><rect x="14.68" y="24.80" width="12.98" height="13.40" fill="#f5e8a0"/><rect x="28.36" y="24.80" width="12.98" height="13.40" fill="#f8e07a"/><rect x="42.04" y="24.80" width="12.98" height="13.40" fill="#fad447"/><rect x="55.72" y="24.80" width="12.98" height="13.40" fill="#fdca00"/><rect x="69.41" y="24.80" width="12.98" height="13.40" fill="#fdb500"/><rect x="83.09" y="24.80" width="12.98" height="13.40" fill="#fdac00"/><rect x="96.77" y="24.80" width="12.98" height="13.40" fill="#fd9f00"/><rect x="110.45" y="24.80" width="12.98" height="13.40" fill="#f0e6b4"/><rect x="124.13" y="24.80" width="12.98" height="13.40" fill="#f5e08c"/><rect x="137.81" y="24.80" width="12.98" height="13.40" fill="#f9d35c"/><rect x="151.49" y="24.80" width="12.98" height="13.40" fill="#fcc72e"/><rect x="165.18" y="24.80" width="12.98" height="13.40" fill="#fdc000"/><rect x="178.86" y="24.80" width="12.98" height="13.40" fill="#fdaa00"/><rect x="192.54" y="24.80" width="12.98" height="13.40" fill="#fd9500"/><rect x="206.22" y="24.80" width="12.98" height="13.40" fill="#f0cd5a"/><rect x="1.00" y="38.60" width="12.98" height="13.30" fill="#f0c040"/><rect x="14.68" y="38.60" width="12.98" height="13.30" fill="#f0b428"/><rect x="28.36" y="38.60" width="12.98" height="13.30" fill="#f0a808"/><rect x="42.04" y="38.60" width="12.98" height="13.30" fill="#f09a00"/><rect x="55.72" y="38.60" width="12.98" height="13.30" fill="#ee8a00"/><rect x="69.41" y="38.60" width="12.98" height="13.30" fill="#ea7c00"/><rect x="83.09" y="38.60" width="12.98" height="13.30" fill="#f5e2a8"/><rect x="96.77" y="38.60" width="12.98" height="13.30" fill="#f8d88a"/><rect x="110.45" y="38.60" width="12.98" height="13.30" fill="#fbcb60"/><rect x="124.13" y="38.60" width="12.98" height="13.30" fill="#fdb930"/><rect x="137.81" y="38.60" width="12.98" height="13.30" fill="#fdaa00"/><rect x="151.49" y="38.60" width="12.98" height="13.30" fill="#fd9a00"/><rect x="165.18" y="38.60" width="12.98" height="13.30" fill="#fd8400"/><rect x="178.86" y="38.60" width="12.98" height="13.30" fill="#ecdba0"/><rect x="192.54" y="38.60" width="12.98" height="13.30" fill="#eccd80"/><rect x="206.22" y="38.60" width="12.98" height="13.30" fill="#e8bc5c"/><rect x="1.00" y="52.30" width="12.98" height="12.90" fill="#e8ac38"/><rect x="14.68" y="52.30" width="12.98" height="12.90" fill="#dc9808"/><rect x="28.36" y="52.30" width="12.98" height="12.90" fill="#d08c04"/><rect x="42.04" y="52.30" width="12.98" height="12.90" fill="#c07004"/><rect x="55.72" y="52.30" width="12.98" height="12.90" fill="#e8dcb4"/><rect x="69.41" y="52.30" width="12.98" height="12.90" fill="#dcc484"/><rect x="83.09" y="52.30" width="12.98" height="12.90" fill="#d0ac5a"/><rect x="96.77" y="52.30" width="12.98" height="12.90" fill="#c09632"/><rect x="110.45" y="52.30" width="12.98" height="12.90" fill="#b48420"/><rect x="124.13" y="52.30" width="12.98" height="12.90" fill="#a07008"/><rect x="137.81" y="52.30" width="12.98" height="12.90" fill="#8c5a04"/><rect x="151.49" y="52.30" width="12.98" height="12.90" fill="#ecdc98"/><rect x="165.18" y="52.30" width="12.98" height="12.90" fill="#ecd07c"/><rect x="178.86" y="52.30" width="12.98" height="12.90" fill="#ecbe4e"/><rect x="192.54" y="52.30" width="12.98" height="12.90" fill="#eeb030"/><rect x="206.22" y="52.30" width="12.98" height="12.90" fill="#f0a000"/><rect x="1.00" y="65.60" width="12.98" height="13.60" fill="#f08c00"/><rect x="14.68" y="65.60" width="12.98" height="13.60" fill="#e87404"/><rect x="28.36" y="65.60" width="12.98" height="13.60" fill="#c87004"/><rect x="42.04" y="65.60" width="12.98" height="13.60" fill="#ac6408"/><rect x="55.72" y="65.60" width="12.98" height="13.60" fill="#94600e"/><rect x="69.41" y="65.60" width="12.98" height="13.60" fill="#7c5414"/><rect x="83.09" y="65.60" width="12.98" height="13.60" fill="#684a1c"/><rect x="96.77" y="65.60" width="12.98" height="13.60" fill="#56401c"/><rect x="110.45" y="65.60" width="12.98" height="13.60" fill="#46341c"/><rect x="124.13" y="65.60" width="12.98" height="13.60" fill="#f0dc9c"/><rect x="137.81" y="65.60" width="12.98" height="13.60" fill="#eec46c"/><rect x="151.49" y="65.60" width="12.98" height="13.60" fill="#eeb458"/><rect x="165.18" y="65.60" width="12.98" height="13.60" fill="#ee9c2c"/><rect x="178.86" y="65.60" width="12.98" height="13.60" fill="#ec8808"/><rect x="192.54" y="65.60" width="12.98" height="13.60" fill="#e87808"/><rect x="206.22" y="65.60" width="12.98" height="13.60" fill="#e06004"/><rect x="1.00" y="79.70" width="12.98" height="13.40" fill="#f8b880"/><rect x="14.68" y="79.70" width="12.98" height="13.40" fill="#f0a054"/><rect x="28.36" y="79.70" width="12.98" height="13.40" fill="#e88c2c"/><rect x="42.04" y="79.70" width="12.98" height="13.40" fill="#e07c04"/><rect x="55.72" y="79.70" width="12.98" height="13.40" fill="#d47404"/><rect x="69.41" y="79.70" width="12.98" height="13.40" fill="#c86804"/><rect x="83.09" y="79.70" width="12.98" height="13.40" fill="#b85c04"/><rect x="96.77" y="79.70" width="12.98" height="13.40" fill="#e89c5c"/><rect x="110.45" y="79.70" width="12.98" height="13.40" fill="#e09044"/><rect x="124.13" y="79.70" width="12.98" height="13.40" fill="#d4802c"/><rect x="137.81" y="79.70" width="12.98" height="13.40" fill="#c87010"/><rect x="151.49" y="79.70" width="12.98" height="13.40" fill="#c06808"/><rect x="165.18" y="79.70" width="12.98" height="13.40" fill="#b86004"/><rect x="178.86" y="79.70" width="12.98" height="13.40" fill="#a85808"/><rect x="192.54" y="79.70" width="12.98" height="13.40" fill="#9c500c"/><rect x="206.22" y="79.70" width="12.98" height="13.40" fill="#904c10"/><rect x="1.00" y="93.50" width="12.98" height="12.80" fill="#7c4414"/><rect x="14.68" y="93.50" width="12.98" height="12.80" fill="#704018"/><rect x="28.36" y="93.50" width="12.98" height="12.80" fill="#643c1c"/><rect x="42.04" y="93.50" width="12.98" height="12.80" fill="#583220"/><rect x="55.72" y="93.50" width="12.98" height="12.80" fill="#442c1c"/><rect x="69.41" y="93.50" width="12.98" height="12.80" fill="#f8e0b0"/><rect x="83.09" y="93.50" width="12.98" height="12.80" fill="#fcd090"/><rect x="96.77" y="93.50" width="12.98" height="12.80" fill="#fdc068"/><rect x="110.45" y="93.50" width="12.98" height="12.80" fill="#fdac40"/><rect x="124.13" y="93.50" width="12.98" height="12.80" fill="#fd9c10"/><rect x="137.81" y="93.50" width="12.98" height="12.80" fill="#fd8800"/><rect x="151.49" y="93.50" width="12.98" height="12.80" fill="#fd6c00"/><rect x="165.18" y="93.50" width="12.98" height="12.80" fill="#f8e0cc"/><rect x="178.86" y="93.50" width="12.98" height="12.80" fill="#fcc89c"/><rect x="192.54" y="93.50" width="12.98" height="12.80" fill="#fdb480"/><rect x="206.22" y="93.50" width="12.98" height="12.80" fill="#fda054"/><rect x="1.00" y="106.80" width="12.98" height="12.80" fill="#fd9028"/><rect x="14.68" y="106.80" width="12.98" height="12.80" fill="#fd7c00"/><rect x="28.36" y="106.80" width="12.98" height="12.80" fill="#fd5c04"/><rect x="42.04" y="106.80" width="12.98" height="12.80" fill="#f8dcc4"/><rect x="55.72" y="106.80" width="12.98" height="12.80" fill="#fbd0ac"/><rect x="69.41" y="106.80" width="12.98" height="12.80" fill="#f8b888"/><rect x="83.09" y="106.80" width="12.98" height="12.80" fill="#f4a064"/><rect x="96.77" y="106.80" width="12.98" height="12.80" fill="#ec8838"/><rect x="110.45" y="106.80" width="12.98" height="12.80" fill="#e07008"/><rect x="124.13" y="106.80" width="12.98" height="12.80" fill="#c85808"/><rect x="137.81" y="106.80" width="12.98" height="12.80" fill="#ecbc94"/><rect x="151.49" y="106.80" width="12.98" height="12.80" fill="#e4a878"/><rect x="165.18" y="106.80" width="12.98" height="12.80" fill="#d48c54"/><rect x="178.86" y="106.80" width="12.98" height="12.80" fill="#c47838"/><rect x="192.54" y="106.80" width="12.98" height="12.80" fill="#b46824"/><rect x="206.22" y="106.80" width="12.98" height="12.80" fill="#a85c10"/><rect x="1.00" y="120.00" width="12.98" height="6.70" fill="#8c4408"/><rect x="14.68" y="120.00" width="12.98" height="6.70" fill="#f0dccc"/><rect x="28.36" y="120.00" width="12.98" height="6.70" fill="#dcbca0"/><rect x="42.04" y="120.00" width="12.98" height="6.70" fill="#c89c78"/><rect x="55.72" y="120.00" width="12.98" height="6.70" fill="#b08458"/><rect x="69.41" y="120.00" width="12.98" height="6.70" fill="#946838"/><rect x="83.09" y="120.00" width="12.98" height="6.70" fill="#845428"/><rect x="96.77" y="120.00" width="12.98" height="6.70" fill="#643818"/><rect x="110.45" y="120.00" width="12.98" height="6.70" fill="#dc5c04"/><rect x="124.13" y="120.00" width="12.98" height="6.70" fill="#c05008"/><rect x="137.81" y="120.00" width="12.98" height="6.70" fill="#a84c0c"/><rect x="151.49" y="120.00" width="12.98" height="6.70" fill="#944410"/><rect x="165.18" y="120.00" width="12.98" height="6.70" fill="#7c3c14"/><rect x="178.86" y="120.00" width="12.98" height="6.70" fill="#683418"/><rect x="192.54" y="120.00" width="12.98" height="6.70" fill="#4c2c1c"/><rect x="206.22" y="120.00" width="12.98" height="6.70" fill="#fcd0b8"/></svg>
<div class="a" style="left:1472.7px;top:243.7px;width:17.1px;height:126px;background:#3e3e3e;"></div>
<svg class="a" style="left:1477px;top:248.5px" width="9" height="8" viewBox="0 0 9 8"><path d="M4.500 0.500L8.500 7.500h-8z" fill="#7a7a7a"/></svg>
<div class="a" style="left:1477.65px;top:262.85px;width:7.3px;height:7.3px;border-radius:50%;background:#7a7a7a;"></div>
<svg class="a" style="left:1477px;top:357.5px" width="9" height="8" viewBox="0 0 9 8"><path d="M0.500 0.500h8L4.500 7.500z" fill="#7a7a7a"/></svg>
<div class="a" style="left:1245.7px;top:374px;width:243.5px;height:20px;background:#404040;border-radius:2.5px;"></div>
<svg class="a" style="left:1250.5px;top:378px" width="13" height="13" viewBox="0 0 13 13"><circle cx="5" cy="5" r="3.800" fill="none" stroke="#e0e0e0" stroke-width="1.300"/><path d="M7.800 7.800l4 4" stroke="#e0e0e0" stroke-width="1.400"/></svg>
<div class="t" style="left:1266.5px;top:379.1px;font-size:12px;color:#9a9a9a;letter-spacing:-1.087px;">Search</div>
<div class="a" style="left:1236px;top:399.7px;width:264px;height:24px;background:#262626;"></div>
<div class="a" style="left:1243.2px;top:406.2px;width:1px;height:9px;background:#555;"></div>
<div class="a" style="left:1253.4px;top:400.7px;width:39.1px;height:23px;background:#3c3c3c;"></div>
<div class="t" style="left:1297.0px;top:405.1px;font-size:12px;color:#c9c9c9;letter-spacing:-0.781px;">Effects</div>
<div class="t" style="left:1337.3px;top:405.1px;font-size:12px;color:#c9c9c9;letter-spacing:-0.946px;">Styles</div>
<div class="t" style="left:1374.3px;top:405.1px;font-size:12px;color:#c9c9c9;letter-spacing:-0.847px;">Text Styles</div>
<div class="t" style="left:1432.0px;top:405.1px;font-size:12px;color:#c9c9c9;letter-spacing:-0.802px;">Stock</div>
<svg class="a" style="left:1483.5px;top:406.2px" width="13" height="10" viewBox="0 0 13 10"><path d="M1 1.500h8M1 4h8M1 6.500h8" stroke="#dcdcdc" stroke-width="1.300"/><path d="M9.500 7h3l-1.500 2z" fill="#dcdcdc"/></svg>
<div class="t" style="left:1257.7px;top:405.2px;font-size:12px;color:#f6f6f6;letter-spacing:-1.003px;">Layers</div>
<div class="a" style="left:1236px;top:423.7px;width:264px;height:27.8px;background:#3c3c3c;"></div>
<div class="t" style="left:1244.0px;top:431.3px;font-size:12px;color:#575757;letter-spacing:-1.164px;">Opacity:</div>
<div class="a" style="left:1283.1px;top:427.6px;width:72.4px;height:19.1px;background:#363636;border-radius:2.5px;border:1px solid #2b2b2b;"></div>
<div class="t" style="left:1288.8px;top:431.7px;font-size:12px;color:#8c8c8c;letter-spacing:-1.085px;">100 %</div>
<svg class="a" style="left:1345px;top:434px" width="8" height="6" viewBox="0 0 8 6"><path d="M0.500 1h7L4 5z" fill="#9a9a9a"/></svg>
<div class="a" style="left:1360.4px;top:427.6px;width:91.6px;height:19.1px;background:#363636;border-radius:2.5px;border:1px solid #2b2b2b;"></div>
<div class="t" style="left:1365.4px;top:431.5px;font-size:12px;color:#8c8c8c;letter-spacing:-0.612px;">Normal</div>
<svg class="a" style="left:1440px;top:434px" width="8" height="6" viewBox="0 0 8 6"><path d="M0.500 1h7L4 5z" fill="#777"/></svg>
<svg class="a" style="left:1457px;top:430.8px" width="12.2" height="12.2" viewBox="0 0 13.600 13.600"><rect x="5.400" y="-0.300" width="2.800" height="3.200" fill="#d6d6d6" transform="rotate(0 6.800 6.800)"/><rect x="5.400" y="-0.300" width="2.800" height="3.200" fill="#d6d6d6" transform="rotate(45 6.800 6.800)"/><rect x="5.400" y="-0.300" width="2.800" height="3.200" fill="#d6d6d6" transform="rotate(90 6.800 6.800)"/><rect x="5.400" y="-0.300" width="2.800" height="3.200" fill="#d6d6d6" transform="rotate(135 6.800 6.800)"/><rect x="5.400" y="-0.300" width="2.800" height="3.200" fill="#d6d6d6" transform="rotate(180 6.800 6.800)"/><rect x="5.400" y="-0.300" width="2.800" height="3.200" fill="#d6d6d6" transform="rotate(225 6.800 6.800)"/><rect x="5.400" y="-0.300" width="2.800" height="3.200" fill="#d6d6d6" transform="rotate(270 6.800 6.800)"/><rect x="5.400" y="-0.300" width="2.800" height="3.200" fill="#d6d6d6" transform="rotate(315 6.800 6.800)"/><circle cx="6.800" cy="6.800" r="3.500" fill="none" stroke="#d6d6d6" stroke-width="2.400"/></svg>
<svg class="a" style="left:1479.5px;top:429.5px" width="11" height="14" viewBox="0 0 11 14"><path d="M3 6V4a2.500 2.500 0 0 1 5 0v2" fill="none" stroke="#c9c9c9" stroke-width="1.300"/><rect x="1.500" y="6" width="8" height="6.800" rx="0.800" fill="#c9c9c9"/></svg>
<div class="a" style="left:1236px;top:451.5px;width:264px;height:175.5px;background:#202020;"></div>
<div class="a" style="left:1483px;top:451.5px;width:17px;height:175.5px;background:#3a3a3a;"></div>
<div class="a" style="left:1236px;top:452px;width:247px;height:28.3px;background:#3a3a3a;"></div>
<div class="a" style="left:1275.800px;top:452.3px;width:27.500px;height:27.7px;background:#2d2d2d;border:1px solid #1f1f1f;overflow:hidden"><svg width="26" height="27" viewBox="0 0 26 27"><path d="M6 4c6 4 10 10 15 19" fill="none" stroke="#161616" stroke-width="0.900"/></svg></div>
<div class="t" style="left:1307.1px;top:460.3px;font-size:12px;color:#e8e8e8;letter-spacing:-0.500px;">(Curve)</div>
<svg class="a" style="left:1467.5px;top:459.5px" width="13" height="13" viewBox="0 0 13 13"><rect x="0.800" y="0.800" width="11.400" height="11.400" rx="2" fill="#3a3a3a" stroke="#cdcdcd" stroke-width="1.100"/><path d="M3.300 6.800l2.300 2.600 4.200-6" fill="none" stroke="#f2f2f2" stroke-width="1.500"/></svg>
<div class="a" style="left:1236px;top:481.7px;width:247px;height:28.3px;background:#3a3a3a;"></div>
<div class="a" style="left:1275.800px;top:482px;width:27.500px;height:27.7px;background:#2d2d2d;border:1px solid #1f1f1f;overflow:hidden"><svg width="26" height="27" viewBox="0 0 26 27"><path d="M6 21c-1-7 0-12 9-15 3 0 6 1 8 3" fill="none" stroke="#161616" stroke-width="0.900"/></svg></div>
<div class="t" style="left:1307.1px;top:490.0px;font-size:12px;color:#e8e8e8;letter-spacing:-0.500px;">(Curve)</div>
<svg class="a" style="left:1467.5px;top:489.2px" width="13" height="13" viewBox="0 0 13 13"><rect x="0.800" y="0.800" width="11.400" height="11.400" rx="2" fill="#3a3a3a" stroke="#cdcdcd" stroke-width="1.100"/><path d="M3.300 6.800l2.300 2.600 4.200-6" fill="none" stroke="#f2f2f2" stroke-width="1.500"/></svg>
<div class="a" style="left:1236px;top:511.4px;width:247px;height:28.3px;background:#3a3a3a;"></div>
<div class="a" style="left:1275.800px;top:511.7px;width:27.500px;height:27.7px;background:#2d2d2d;border:1px solid #1f1f1f;overflow:hidden"><svg width="26" height="27" viewBox="0 0 26 27"><path d="M3 20c8 4 14 0 16-7 .5-3 .5-6 .5-9" fill="none" stroke="#161616" stroke-width="0.900"/></svg></div>
<div class="t" style="left:1307.1px;top:519.7px;font-size:12px;color:#e8e8e8;letter-spacing:-0.500px;">(Curve)</div>
<svg class="a" style="left:1467.5px;top:518.9px" width="13" height="13" viewBox="0 0 13 13"><rect x="0.800" y="0.800" width="11.400" height="11.400" rx="2" fill="#3a3a3a" stroke="#cdcdcd" stroke-width="1.100"/><path d="M3.300 6.800l2.300 2.600 4.200-6" fill="none" stroke="#f2f2f2" stroke-width="1.500"/></svg>
<div class="a" style="left:1236px;top:541.1px;width:247px;height:28.3px;background:#3a3a3a;"></div>
<div class="a" style="left:1275.800px;top:541.4px;width:27.500px;height:27.7px;background:#2d2d2d;border:1px solid #1f1f1f;overflow:hidden"><svg width="26" height="27" viewBox="0 0 26 27"><path d="M6 3c2 8 7 16 16 20" fill="none" stroke="#161616" stroke-width="0.900"/></svg></div>
<div class="t" style="left:1307.1px;top:549.4px;font-size:12px;color:#e8e8e8;letter-spacing:-0.500px;">(Curve)</div>
<svg class="a" style="left:1467.5px;top:548.6px" width="13" height="13" viewBox="0 0 13 13"><rect x="0.800" y="0.800" width="11.400" height="11.400" rx="2" fill="#3a3a3a" stroke="#cdcdcd" stroke-width="1.100"/><path d="M3.300 6.800l2.300 2.600 4.200-6" fill="none" stroke="#f2f2f2" stroke-width="1.500"/></svg>
<div class="a" style="left:1236px;top:570.8px;width:247px;height:28.3px;background:#3a3a3a;"></div>
<div class="a" style="left:1275.800px;top:571.1px;width:27.500px;height:27.7px;background:#2d2d2d;border:1px solid #1f1f1f;overflow:hidden"><svg width="26" height="27" viewBox="0 0 26 27"><path d="M4 16c4-6 10-10 16-9 4 2 0 9-10 12" fill="none" stroke="#161616" stroke-width="0.900"/></svg></div>
<div class="t" style="left:1307.1px;top:579.1px;font-size:12px;color:#e8e8e8;letter-spacing:-0.500px;">(Curve)</div>
<svg class="a" style="left:1467.5px;top:578.3px" width="13" height="13" viewBox="0 0 13 13"><rect x="0.800" y="0.800" width="11.400" height="11.400" rx="2" fill="#3a3a3a" stroke="#cdcdcd" stroke-width="1.100"/><path d="M3.300 6.800l2.300 2.600 4.200-6" fill="none" stroke="#f2f2f2" stroke-width="1.500"/></svg>
<div class="a" style="left:1236px;top:600.5px;width:247px;height:26.3px;background:#3a3a3a;"></div>
<div class="a" style="left:1275.800px;top:600.8px;width:27.500px;height:25.7px;background:#2d2d2d;border:1px solid #1f1f1f;overflow:hidden"><svg width="26" height="27" viewBox="0 0 26 27"><path d="M11 3c9 3 12 9 9 15-2 3-5 5-8 6" fill="none" stroke="#161616" stroke-width="0.900"/></svg></div>
<div class="t" style="left:1307.1px;top:608.8px;font-size:12px;color:#e8e8e8;letter-spacing:-0.500px;">(Curve)</div>
<svg class="a" style="left:1467.5px;top:608px" width="13" height="13" viewBox="0 0 13 13"><rect x="0.800" y="0.800" width="11.400" height="11.400" rx="2" fill="#3a3a3a" stroke="#cdcdcd" stroke-width="1.100"/><path d="M3.300 6.800l2.300 2.600 4.200-6" fill="none" stroke="#f2f2f2" stroke-width="1.500"/></svg>
<svg class="a" style="left:1487px;top:456.5px" width="9" height="8" viewBox="0 0 9 8"><path d="M4.500 0.500L8.500 7.500h-8z" fill="#6f6f6f"/></svg>
<div class="a" style="left:1487.95px;top:526.95px;width:7.3px;height:7.3px;border-radius:50%;background:#777;"></div>
<svg class="a" style="left:1487px;top:614px" width="9" height="8" viewBox="0 0 9 8"><path d="M0.500 0.500h8L4.500 7.500z" fill="#777"/></svg>
<div class="a" style="left:1236px;top:626.8px;width:264px;height:20.9px;background:#3d3d3d;"></div>
<div class="a" style="left:1241px;top:628px;width:20px;height:18.7px;background:#2a2a2a;"></div>
<svg class="a" style="left:1242.5px;top:629.5px" width="17" height="16" viewBox="0 0 17 16"><path d="M1.500 3.500L8.500 6.500l7-3-7-3z" fill="#d9d9d9"/><path d="M1.500 7L8.500 10l7-3M1.500 10.500l7 3 7-3" fill="none" stroke="#d9d9d9" stroke-width="1.400"/></svg>
<svg class="a" style="left:1330px;top:631.5px" width="15" height="12.5" viewBox="0 0 15 12.5"><rect width="15" height="12.500" rx="1" fill="#b5b5b5"/><circle cx="7.500" cy="6.200" r="3.900" fill="#2e2e2e"/></svg>
<svg class="a" style="left:1353px;top:631px" width="13" height="13" viewBox="0 0 13 13"><circle cx="6.500" cy="6.500" r="5.400" fill="#3d3d3d" stroke="#b5b5b5" stroke-width="1.300"/><path d="M10.400 2.700A5.400 5.400 0 0 1 2.700 10.400z" fill="#b5b5b5"/></svg>
<div class="t" style="left:1375px;top:628.300px;font-family:'Liberation Serif',serif;font-style:italic;font-size:16px;color:#b5b5b5;letter-spacing:-0.500px">fx</div>
<svg class="a" style="left:1436.5px;top:631px" width="11.5" height="13.5" viewBox="0 0 11.5 13.5"><path d="M1 1h6l3.500 3.500v8H1z" fill="none" stroke="#b5b5b5" stroke-width="1.200"/><path d="M7 1v3.500h3.500" fill="none" stroke="#b5b5b5" stroke-width="1.100"/></svg>
<svg class="a" style="left:1459px;top:632px" width="10.5" height="11.5" viewBox="0 0 10.5 11.5"><rect x="0.500" y="0.500" width="9.500" height="10.500" fill="none" stroke="#b5b5b5" stroke-width="1"/><rect x="0" y="0" width="2.500" height="2.500" fill="#b5b5b5"/><rect x="0" y="5" width="2.500" height="2.500" fill="#b5b5b5"/><rect x="2.5" y="2.5" width="2.500" height="2.500" fill="#b5b5b5"/><rect x="2.5" y="7.5" width="2.500" height="2.500" fill="#b5b5b5"/><rect x="5" y="0" width="2.500" height="2.500" fill="#b5b5b5"/><rect x="5" y="5" width="2.500" height="2.500" fill="#b5b5b5"/><rect x="7.5" y="2.5" width="2.500" height="2.500" fill="#b5b5b5"/><rect x="7.5" y="7.5" width="2.500" height="2.500" fill="#b5b5b5"/></svg>
<svg class="a" style="left:1481.5px;top:630.5px" width="10.5" height="14" viewBox="0 0 10.5 14"><path d="M0.500 3h9.500M3.500 2.800V1h3.500v1.800" stroke="#b5b5b5" stroke-width="1.200" fill="none"/><path d="M1.500 4.500h7.500v8.500h-7.500z" fill="none" stroke="#b5b5b5" stroke-width="1.200"/><path d="M4 5.500v6.500M6.500 5.500v6.500" stroke="#b5b5b5" stroke-width="1"/></svg>
<div class="a" style="left:1236px;top:647.6px;width:264px;height:23.6px;background:#262626;"></div>
<div class="a" style="left:1243.2px;top:654.1px;width:1px;height:9px;background:#555;"></div>
<div class="a" style="left:1253.4px;top:648.6px;width:56.4px;height:22.6px;background:#3c3c3c;"></div>
<div class="t" style="left:1314.6px;top:653.0px;font-size:12px;color:#c9c9c9;letter-spacing:-0.562px;">History</div>
<div class="t" style="left:1357.4px;top:653.0px;font-size:12px;color:#c9c9c9;letter-spacing:-0.528px;">Navigator</div>
<div class="t" style="left:1258.2px;top:653.2px;font-size:12px;color:#f6f6f6;letter-spacing:-0.826px;">Transform</div>
<div class="a" style="left:1236px;top:671.2px;width:264px;height:101.7px;background:#3d3d3d;"></div>
<svg class="a" style="left:1257px;top:691.5px" width="36" height="36" viewBox="0 0 36 36"><rect x="3" y="3" width="30" height="30" fill="#5f5f5f"/><rect x="0" y="0" width="6" height="6" fill="#5f5f5f"/><rect x="0" y="15" width="6" height="6" fill="#5f5f5f"/><rect x="0" y="30" width="6" height="6" fill="#5f5f5f"/><rect x="15" y="0" width="6" height="6" fill="#5f5f5f"/><rect x="15" y="15" width="6" height="6" fill="#5f5f5f"/><rect x="15" y="30" width="6" height="6" fill="#5f5f5f"/><rect x="30" y="0" width="6" height="6" fill="#5f5f5f"/><rect x="30" y="15" width="6" height="6" fill="#5f5f5f"/><rect x="30" y="30" width="6" height="6" fill="#5f5f5f"/></svg>
<div class="t" style="left:1312.8px;top:687.5px;font-size:12px;color:#565656;">X:</div>
<div class="a" style="left:1325.4px;top:682.6px;width:62.2px;height:18.8px;background:#343434;border-radius:2.5px;border:1px solid #232323;"></div><div class="t" style="left:1330.2px;top:687.5px;font-size:12px;color:#8c8c8c;letter-spacing:-0.337px;">0 in</div>
<div class="t" style="left:1312.8px;top:711.1px;font-size:12px;color:#565656;">Y:</div>
<div class="a" style="left:1325.4px;top:706.2px;width:62.2px;height:18.4px;background:#343434;border-radius:2.5px;border:1px solid #232323;"></div><div class="t" style="left:1330.2px;top:711.1px;font-size:12px;color:#8c8c8c;letter-spacing:-0.337px;">0 in</div>
<div class="t" style="left:1399.6px;top:687.5px;font-size:12px;color:#565656;">W:</div>
<div class="a" style="left:1415.9px;top:682.6px;width:62.8px;height:18.8px;background:#343434;border-radius:2.5px;border:1px solid #232323;"></div><div class="t" style="left:1420.7px;top:687.5px;font-size:12px;color:#8c8c8c;letter-spacing:-0.337px;">0 in</div>
<div class="t" style="left:1402.0px;top:711.1px;font-size:12px;color:#565656;">H:</div>
<div class="a" style="left:1415.9px;top:706.2px;width:62.8px;height:18.4px;background:#343434;border-radius:2.5px;border:1px solid #232323;"></div><div class="t" style="left:1420.7px;top:711.1px;font-size:12px;color:#8c8c8c;letter-spacing:-0.337px;">0 in</div>
<div class="t" style="left:1312.8px;top:740.5px;font-size:12px;color:#565656;">R:</div>
<div class="a" style="left:1325.4px;top:735.6px;width:62.2px;height:19px;background:#343434;border-radius:2.5px;border:1px solid #232323;"></div><div class="t" style="left:1330.2px;top:740.5px;font-size:12px;color:#8c8c8c;letter-spacing:-0.502px;">0 °</div><svg class="a" style="left:1376.1px;top:742.1px" width="8" height="6" viewBox="0 0 8 6"><path d="M0.500 1h7L4 5z" fill="#b5b5b5"/></svg>
<div class="t" style="left:1404.0px;top:740.5px;font-size:12px;color:#565656;">S:</div>
<div class="a" style="left:1415.9px;top:735.6px;width:62.8px;height:19px;background:#343434;border-radius:2.5px;border:1px solid #232323;"></div><div class="t" style="left:1420.7px;top:740.5px;font-size:12px;color:#8c8c8c;letter-spacing:-0.502px;">0 °</div><svg class="a" style="left:1467.2px;top:742.1px" width="8" height="6" viewBox="0 0 8 6"><path d="M0.500 1h7L4 5z" fill="#b5b5b5"/></svg>
<svg class="a" style="left:1485.5px;top:697px" width="5" height="14.5" viewBox="0 0 5 14.5"><circle cx="2.500" cy="3" r="1.900" fill="none" stroke="#9a9a9a" stroke-width="0.900"/><circle cx="2.500" cy="11.500" r="1.900" fill="none" stroke="#9a9a9a" stroke-width="0.900"/><path d="M2.500 4.500v5.500" stroke="#9a9a9a" stroke-width="0.900"/></svg>
<svg class="a" style="left:1222.5px;top:131.5px" width="7.5" height="7" viewBox="0 0 7.5 7"><path d="M3.750 0.300L7.300 6.700h-7.100z" fill="#727272"/></svg>
<div class="a" style="left:1222.65px;top:299.85px;width:7.3px;height:7.3px;border-radius:50%;background:#8a8a8a;"></div>
<svg class="a" style="left:1222.2px;top:743.8px" width="7.5" height="7" viewBox="0 0 7.5 7"><path d="M0.200 0.300h7.100L3.750 6.700z" fill="#868686"/></svg>
<svg class="a" style="left:302px;top:761px" width="7" height="7.5" viewBox="0 0 7 7.5"><path d="M6.700 0.200v7.100L0.300 3.750z" fill="#868686"/></svg>
<div class="a" style="left:466px;top:761px;width:11px;height:7px;border-radius:3.500px;background:#858585"></div>
<svg class="a" style="left:1205px;top:761px" width="7" height="7.5" viewBox="0 0 7 7.5"><path d="M0.300 0.200v7.100L6.700 3.750z" fill="#868686"/></svg>
<div class="t" style="left:16.5px;top:780.5px;font-size:12px;color:#f5f5f5;font-weight:bold;letter-spacing:-0.210px;">Drag</div>
<div class="t" style="left:46.5px;top:780.5px;font-size:12px;color:#b8b8b8;letter-spacing:-0.207px;">to marquee select.</div>
<div class="t" style="left:145.0px;top:780.5px;font-size:12px;color:#f5f5f5;font-weight:bold;letter-spacing:-0.536px;">Click</div>
<div class="t" style="left:174.5px;top:780.5px;font-size:12px;color:#b8b8b8;letter-spacing:-0.104px;">an object to select it.</div>
<svg class="a" style="left:18px;top:803px" width="28" height="30" viewBox="0 0 28 30"><defs><linearGradient id="mn" x1="0" y1="0" x2="0" y2="1"><stop offset="0" stop-color="#f9b83c"/><stop offset="1" stop-color="#f06a1c"/></linearGradient><mask id="mk"><rect width="28" height="30" fill="#fff"/><circle cx="10.500" cy="10.500" r="10.300" fill="#000"/></mask></defs><circle cx="13.500" cy="15.500" r="11" fill="url(#mn)" mask="url(#mk)"/><path d="M4.500 13.200c-2.300 0-2.300-3.600.3-3.600.3-2.900 4.200-3.600 5.500-1.100 1.800-.9 3.700.6 3.100 2.500 1.700.3 1.500 2.200-.2 2.200z" fill="#dfe7f7" stroke="#b4c3ea" stroke-width="0.600"/></svg>
<div class="a" style="left:31.25px;top:804.25px;width:13.5px;height:13.5px;border-radius:50%;background:#d6281f;"></div>
<div class="t" style="left:35.2px;top:806.3px;font-size:11.5px;color:#fff;font-weight:bold;">1</div>
<div class="t" style="left:50.0px;top:806.1px;font-size:13px;color:#222;letter-spacing:-1.136px;">23°C</div>
<div class="t" style="left:50.0px;top:821.7px;font-size:13px;color:#555;letter-spacing:-0.487px;">Mostly clear</div>
<div class="a" style="left:456.8px;top:809.4px;width:10.9px;height:11.2px;background:linear-gradient(135deg,#36b9f2,#1e95e6);border-radius:1px;"></div>
<div class="a" style="left:468.7px;top:809.4px;width:10.9px;height:11.2px;background:linear-gradient(135deg,#2aa6ee,#1484de);border-radius:1px;"></div>
<div class="a" style="left:456.8px;top:821.3px;width:10.9px;height:11.2px;background:linear-gradient(135deg,#1d8fe5,#0f73d6);border-radius:1px;"></div>
<div class="a" style="left:468.7px;top:821.3px;width:10.9px;height:11.2px;background:linear-gradient(135deg,#1580dd,#0a63cc);border-radius:1px;"></div>
<div class="a" style="left:494px;top:805.8px;width:213px;height:29.2px;background:rgba(255,255,255,0.72);border-radius:14.6px;box-shadow:0 0 1px rgba(0,0,0,0.25);"></div>
<svg class="a" style="left:504px;top:812.5px" width="17" height="17" viewBox="0 0 17 17"><circle cx="7" cy="7" r="5.300" fill="none" stroke="#2a2a2a" stroke-width="1.600"/><path d="M11 11l4.500 4.500" stroke="#2a2a2a" stroke-width="1.800" stroke-linecap="round"/></svg>
<div class="t" style="left:529.3px;top:815.0px;font-size:14px;color:#5a5a5a;letter-spacing:-0.793px;">Search</div>
<svg class="a" style="left:680.5px;top:810px" width="22" height="22" viewBox="0 0 22 22"><defs><linearGradient id="bg1" x1="0" y1="0" x2="1" y2="1"><stop offset="0" stop-color="#35c1f1"/><stop offset="1" stop-color="#2250d8"/></linearGradient></defs><path d="M11 1.500a9.500 9.500 0 1 1-5.500 17.200L2 20l1.200-3.800A9.500 9.500 0 0 1 11 1.500z" fill="#f4fbff" stroke="url(#bg1)" stroke-width="1.500"/><path d="M8.500 5v9.500l2.500 1.500 4-2.500v-2.500l-4-1.500v3" fill="none" stroke="url(#bg1)" stroke-width="1.800" stroke-linejoin="round"/></svg>
<div class="a" style="left:719.6px;top:815.5px;width:17.5px;height:16px;background:#1f1f1f;border-radius:1.5px;"></div>
<div class="a" style="left:725.5px;top:810px;width:17.5px;height:16px;background:linear-gradient(135deg,#d0d0d0,#f6f6f6);border-radius:1.5px;opacity:.92;"></div>
<svg class="a" style="left:761.5px;top:808.5px" width="25" height="25" viewBox="0 0 25 25"><defs><linearGradient id="ch" x1="0" y1="0" x2="1" y2="1"><stop offset="0" stop-color="#8f86dc"/><stop offset="1" stop-color="#5a43ae"/></linearGradient></defs><path d="M12.500 1a11.300 11.300 0 1 1-6.500 20.600L1.500 23.500l1.500-4.800A11.300 11.300 0 0 1 12.500 1z" fill="url(#ch)"/><rect x="6.500" y="8.500" width="8" height="7.300" rx="1.600" fill="#fff"/><path d="M15 11l3.800-2.200v7L15 13.600z" fill="#fff"/></svg>
<svg class="a" style="left:805px;top:809.5px" width="25" height="22" viewBox="0 0 25 22"><path d="M0.500 3a1.500 1.500 0 0 1 1.500-1.500h6.500l2.500 2.500H.5z" fill="#e9a825"/><rect x="0.500" y="3.500" width="24" height="17.500" rx="1.500" fill="#f9cb45"/><path d="M0.500 8h24v11.500a1.500 1.500 0 0 1-1.500 1.500H2A1.500 1.500 0 0 1 .5 19.500z" fill="#fbd65f"/><rect x="5.500" y="13.500" width="14" height="7.500" rx="1.200" fill="#2d7fd6"/><rect x="8" y="16" width="9" height="2.200" rx="1" fill="#1762b8"/></svg>
<svg class="a" style="left:847.5px;top:808px" width="25" height="25" viewBox="0 0 25 25"><defs><linearGradient id="ed1" x1="0" y1="0" x2="0" y2="1"><stop offset="0" stop-color="#2a9fe0"/><stop offset="1" stop-color="#1552b0"/></linearGradient><linearGradient id="ed2" x1="0" y1="0" x2="1" y2="0.300"><stop offset="0" stop-color="#30b8ea"/><stop offset="0.600" stop-color="#3ccbb8"/><stop offset="1" stop-color="#6edb4e"/></linearGradient></defs><circle cx="12.500" cy="12.500" r="11.800" fill="url(#ed1)"/><path d="M0.900 10.500C2 4.500 6.800.700 12.500.700c6.600 0 11.600 4.800 11.800 10.800 0 2.800-2 4.700-4.800 4.700-2.400 0-3.600-1-3.100-2.400.5-1.200.2-3.600-3.400-4.500C9 8.300 4 8.500.9 10.500z" fill="url(#ed2)"/><path d="M12.800 9.400c-3.500.200-6 2.900-6 6.200 0 4 3.400 7 7.600 7 2.600 0 5-1.100 6.600-2.800-1.500 .700-3 1-4.500 .800-3.600-.400-5.600-3.100-5.300-6 .200-2 1.200-3.300 1.600-5.200z" fill="#0f3f8e" opacity="0.900"/><path d="M13 9.300c2.400.600 3.700 2.200 3.400 4.500-.5 1.400.7 2.400 3.100 2.400 1 0 1.900-.200 2.600-.700-1.600 2.600-4.300 3.800-6.500 3.300-3-.700-4.500-3.500-3.900-6.300.300-1.300.800-2.200 1.300-3.200z" fill="#e8f7ff"/></svg>
<svg class="a" style="left:890.5px;top:808px" width="24" height="25" viewBox="0 0 24 25"><path d="M7.500 6.500V4a2 2 0 0 1 2-2h5a2 2 0 0 1 2 2v2.500" fill="none" stroke="#3aa0e8" stroke-width="1.600"/><path d="M0.500 6.500h23v14a3.500 3.500 0 0 1-3.500 3.500H4A3.500 3.500 0 0 1 .5 20.500z" fill="#12438c"/><rect x="7.300" y="10" width="4.300" height="4.300" fill="#f25022"/><rect x="12.500" y="10" width="4.300" height="4.300" fill="#7fba00"/><rect x="7.300" y="15.200" width="4.300" height="4.300" fill="#00a4ef"/><rect x="12.500" y="15.200" width="4.300" height="4.300" fill="#ffb900"/></svg>
<svg class="a" style="left:934px;top:809px" width="24" height="23.3" viewBox="0 0 24 23.3"><defs><linearGradient id="ma" x1="0" y1="1" x2="1" y2="0"><stop offset="0" stop-color="#5a2ce0"/><stop offset="1" stop-color="#1e9df2"/></linearGradient></defs><rect width="24" height="23.300" fill="url(#ma)"/><path d="M4.500 17.500L11 6h3.200L7.700 17.500zM10.500 17.500L17 6h2.500v11.500h-3v-6.500l-3 6.500z" fill="#f4f4ff"/></svg>
<div class="a" style="left:970px;top:801.7px;width:38px;height:37.7px;background:rgba(255,255,255,0.55);border-radius:4px;"></div>
<svg class="a" style="left:977.3px;top:808.9px" width="23.5" height="23.5" viewBox="0 0 20 20"><defs><linearGradient id="lg9773" x1="0" y1="0" x2="0" y2="1"><stop offset="0" stop-color="#5cd9fd"/><stop offset="1" stop-color="#2db2ef"/></linearGradient></defs><rect width="20" height="20" fill="url(#lg9773)"/><polygon points="0,0 8,0 0,12.4" fill="#1b74c8"/><polygon points="8,0 12,0 5,12.6 10,20 0,20 0,12.4" fill="#3fc4f7" opacity="0.55"/><path d="M12 0L5 12.6L10 20M5 13H20M8.400 7.600L11.600 12.800M8.400 7.600L5.600 12.800" stroke="#1767b4" stroke-width="0.750" fill="none"/></svg>
<div class="a" style="left:981.6px;top:836.3px;width:15.1px;height:2.8px;background:#0a6cd0;border-radius:1.4px;"></div>
<svg class="a" style="left:1019.5px;top:807.8px" width="25" height="25" viewBox="0 0 25 25"><defs><linearGradient id="mp" x1="0" y1="0" x2="1" y2="1"><stop offset="0" stop-color="#f07a2a"/><stop offset="1" stop-color="#8a4bc8"/></linearGradient></defs><circle cx="12.500" cy="12.500" r="11.800" fill="url(#mp)"/><circle cx="12.500" cy="12.500" r="9.800" fill="#1f1d22"/><path d="M9.500 7.300v10.400l8.300-5.200z" fill="#fff"/></svg>
<div class="a" style="left:814px;top:836.5px;width:6px;height:2.5px;background:#8a8f8d;border-radius:1.3px;"></div>
<div class="a" style="left:857px;top:836.5px;width:6px;height:2.5px;background:#8a8f8d;border-radius:1.3px;"></div>
<div class="a" style="left:1029px;top:836.5px;width:6px;height:2.5px;background:#8a8f8d;border-radius:1.3px;"></div>
<svg class="a" style="left:1211px;top:816px" width="13" height="9" viewBox="0 0 13 9"><path d="M1.500 7.500L6.500 2l5 5.500" fill="none" stroke="#222" stroke-width="1.500" stroke-linecap="round" stroke-linejoin="round"/></svg>
<svg class="a" style="left:1240px;top:811px" width="18" height="19" viewBox="0 0 18 19"><path d="M5 12.500c-3.200 0-3.200-4.800.3-4.800.6-4 6-4.600 7.500-1.200 3-.3 4.300 2.700 3 4.500" fill="#8a8a8a" stroke="#555" stroke-width="1"/><path d="M5 12.500h6" stroke="#555"/><circle cx="12.500" cy="13.500" r="4" fill="#e32f3c"/><rect x="10.300" y="12.800" width="4.400" height="1.400" fill="#fff"/></svg>
<div class="t" style="left:1274.9px;top:807.9px;font-size:12px;color:#222;letter-spacing:-1.202px;">ENG</div>
<div class="t" style="left:1278.8px;top:823.3px;font-size:12px;color:#222;letter-spacing:-1.185px;">US</div>
<svg class="a" style="left:1313.5px;top:812.5px" width="18" height="14" viewBox="0 0 18 14"><path d="M1.500 5.500c4.500-4.500 10.500-4.500 15 0" fill="none" stroke="#b9c5bf" stroke-width="1.100"/><path d="M4 8c3-3 7-3 10 0M6.300 10.300c1.700-1.700 3.700-1.700 5.400 0" fill="none" stroke="#222" stroke-width="1.300"/><circle cx="9" cy="12.300" r="1.100" fill="#222"/></svg>
<svg class="a" style="left:1337.5px;top:813px" width="17" height="15" viewBox="0 0 17 15"><path d="M1 5.500h2.800L7.500 2v11L3.800 9.500H1z" fill="none" stroke="#222" stroke-width="1.100" stroke-linejoin="round"/><path d="M9.500 5.300c1 1.300 1 3.100 0 4.400M11.700 3.500c2 2.400 2 5.600 0 8M14 1.800c3 3.500 3 8 0 11.400" fill="none" stroke="#222" stroke-width="1.100" stroke-linecap="round"/></svg>
<svg class="a" style="left:1360.5px;top:811.5px" width="18" height="16" viewBox="0 0 18 16"><rect x="1.300" y="5.500" width="13.500" height="8" rx="1.500" fill="none" stroke="#222" stroke-width="1.200"/><path d="M3 7h8.500l-1 5H3z" fill="#222"/><rect x="15.200" y="8" width="1.600" height="3" rx="0.700" fill="#222"/><path d="M4.500 0.500L2 5h2.500L3.500 8.500 7 3.500H4.500z" fill="#222" stroke="#c9f5e2" stroke-width="0.500"/></svg>
<div class="t" style="left:1411.9px;top:807.5px;font-size:12px;color:#222;letter-spacing:-0.499px;">8:39 PM</div>
<div class="t" style="left:1393.8px;top:823.3px;font-size:12px;color:#222;letter-spacing:-0.188px;">2023-09-02</div>
<div class="a" style="left:1465.2px;top:813px;width:15.2px;height:15.2px;border-radius:50%;background:#0b6cda;"></div>
<div class="t" style="left:1470.2px;top:816.1px;font-size:10.5px;color:#fff;">3</div>
</body></html>
